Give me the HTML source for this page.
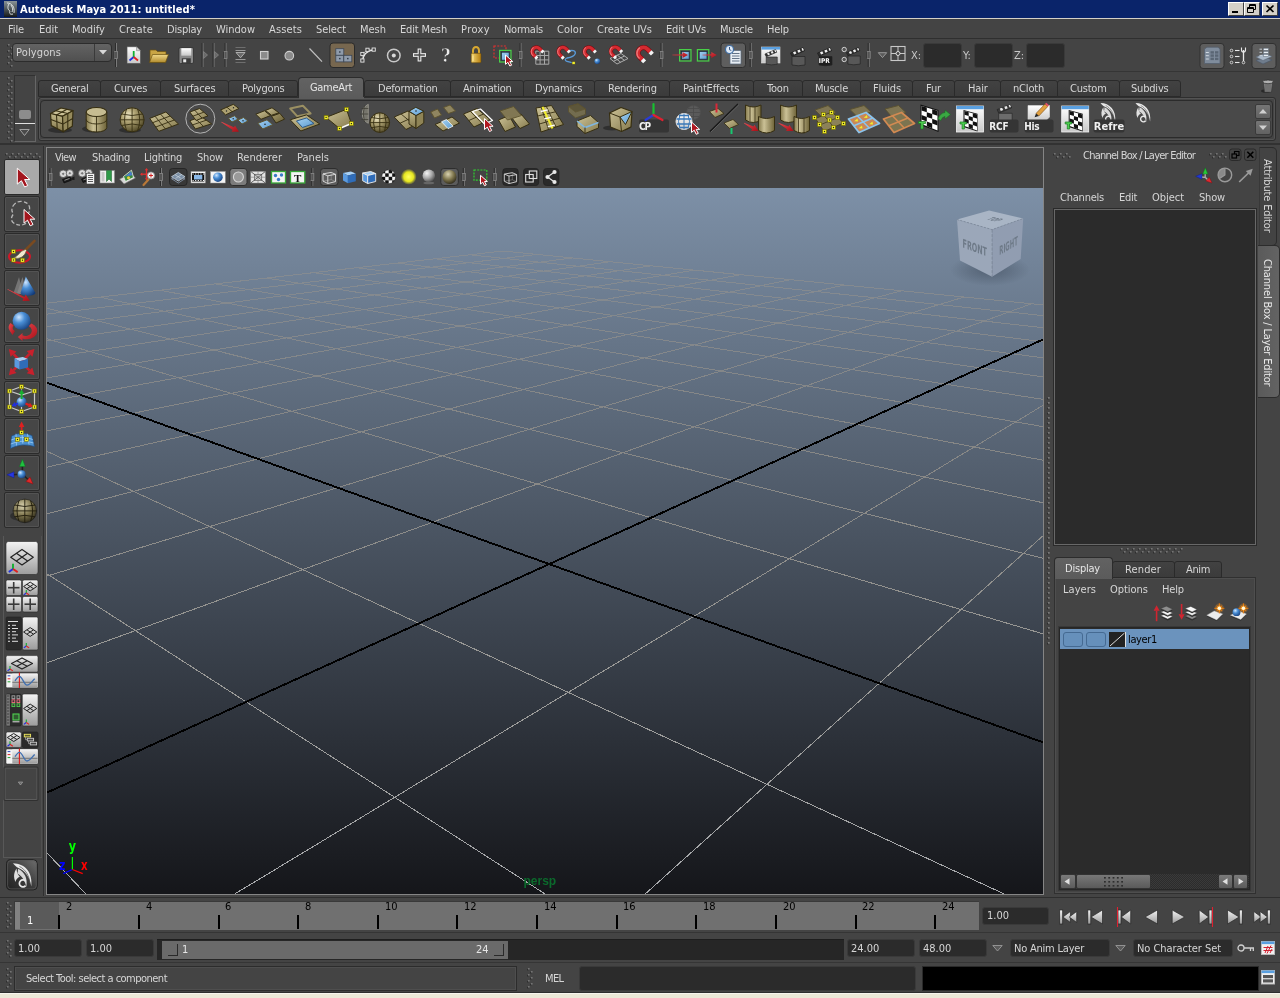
<!DOCTYPE html>
<html><head><meta charset="utf-8"><title>Autodesk Maya 2011: untitled*</title>
<style>
html,body{margin:0;padding:0;background:#444444;overflow:hidden}
body{width:1280px;height:998px;position:relative;font-family:"DejaVu Sans Condensed","Liberation Sans",sans-serif;font-size:11px;color:#d6d6d6}
.a{position:absolute;box-sizing:border-box}
.t{position:absolute;white-space:nowrap;line-height:1.2;will-change:transform}
svg{overflow:visible}
</style></head><body>
<svg width="0" height="0" style="position:absolute"><defs>
<linearGradient id="kh" x1="0" y1="0" x2="1" y2="1"><stop offset="0" stop-color="#cdc398"/><stop offset="1" stop-color="#857a4d"/></linearGradient>
<linearGradient id="khv" x1="0" y1="0" x2="0" y2="1"><stop offset="0" stop-color="#c2b88a"/><stop offset="1" stop-color="#82774b"/></linearGradient>
<linearGradient id="khd" x1="0" y1="0" x2="1" y2="1"><stop offset="0" stop-color="#a79b6c"/><stop offset="1" stop-color="#665c34"/></linearGradient>
<linearGradient id="khcyl" x1="0" y1="0" x2="1" y2="0"><stop offset="0" stop-color="#857a4d"/><stop offset=".35" stop-color="#cbc196"/><stop offset="1" stop-color="#6e6338"/></linearGradient>
<radialGradient id="khsph" cx=".35" cy=".3" r=".8"><stop offset="0" stop-color="#ece5c4"/><stop offset=".35" stop-color="#b0a474"/><stop offset="1" stop-color="#463e1e"/></radialGradient>
<radialGradient id="bsph" cx=".35" cy=".3" r=".8"><stop offset="0" stop-color="#cfe6ff"/><stop offset=".4" stop-color="#4a8fd6"/><stop offset="1" stop-color="#123a78"/></radialGradient>
<radialGradient id="gsph" cx=".35" cy=".3" r=".8"><stop offset="0" stop-color="#f4f4f4"/><stop offset=".5" stop-color="#a8a8a8"/><stop offset="1" stop-color="#404040"/></radialGradient>
<radialGradient id="ysph" cx=".5" cy=".5" r=".5"><stop offset="0" stop-color="#ffff60"/><stop offset=".6" stop-color="#e6e620"/><stop offset="1" stop-color="#e6e620" stop-opacity="0"/></radialGradient>
<radialGradient id="ksph2" cx=".4" cy=".3" r=".8"><stop offset="0" stop-color="#d9d2b0"/><stop offset=".5" stop-color="#7d744c"/><stop offset="1" stop-color="#1e1b10"/></radialGradient>
<linearGradient id="bl" x1="0" y1="0" x2="1" y2="1"><stop offset="0" stop-color="#a6d2f2"/><stop offset="1" stop-color="#5b9bd0"/></linearGradient>
<linearGradient id="btn" x1="0" y1="0" x2="0" y2="1"><stop offset="0" stop-color="#f4f4f4"/><stop offset="1" stop-color="#9c9c9c"/></linearGradient>
<linearGradient id="wht" x1="0" y1="0" x2="0" y2="1"><stop offset="0" stop-color="#ffffff"/><stop offset="1" stop-color="#c8c8c8"/></linearGradient>
<linearGradient id="redg" x1="0" y1="0" x2="1" y2="1"><stop offset="0" stop-color="#e84a50"/><stop offset="1" stop-color="#a80f18"/></linearGradient>
<linearGradient id="fold" x1="0" y1="0" x2="0" y2="1"><stop offset="0" stop-color="#f1d98a"/><stop offset="1" stop-color="#b08a2c"/></linearGradient>
<linearGradient id="gold" x1="0" y1="0" x2="1" y2="0"><stop offset="0" stop-color="#f6d873"/><stop offset="1" stop-color="#b47d10"/></linearGradient>
</defs></svg>
<div class="a" style="left:0px;top:0px;width:1280px;height:18px;background:#0a246a;"></div>
<div class="a" style="left:0px;top:18px;width:1280px;height:1px;background:#d4d0c8;"></div>
<svg class="a" style="left:4px;top:1px;" width="13" height="16" viewBox="0 0 13 16"><defs><linearGradient id="tig" x1="0" y1="0" x2="0" y2="1"><stop offset="0" stop-color="#8a9498"/><stop offset="1" stop-color="#15191b"/></linearGradient></defs><rect width="13" height="16" fill="url(#tig)"/><path d="M3 2 C8 2 11 6 10 12 M5 3 C3 6 4 9 6 10 C5 12 6 14 9 13 M7 4 C9 7 9 9 8 11" stroke="#e8ecec" stroke-width="1" fill="none" opacity=".9"/></svg>
<div class="t" style="left:20px;top:3px;font-size:11px;color:#ffffff;letter-spacing:0.070px;font-weight:bold;">Autodesk Maya 2011: untitled*</div>
<div class="a" style="left:1228px;top:2px;width:16px;height:14px;background:#d4d0c8;border-top:1px solid #fff;border-left:1px solid #fff;border-right:1px solid #404040;border-bottom:1px solid #404040;"></div>
<div class="a" style="left:1232px;top:11px;width:6px;height:2px;background:#000;"></div>
<div class="a" style="left:1244px;top:2px;width:16px;height:14px;background:#d4d0c8;border-top:1px solid #fff;border-left:1px solid #fff;border-right:1px solid #404040;border-bottom:1px solid #404040;"></div>
<svg class="a" style="left:1247px;top:4px;" width="10" height="10" viewBox="0 0 10 10"><path d="M2.5 0.5h6v5h-6z M2.5 1.5h6 M0.5 3.5h6v5h-6z M0.5 4.5h6" stroke="#000" fill="none" stroke-width="1"/><rect x="1" y="5" width="5" height="3" fill="#d4d0c8"/></svg>
<div class="a" style="left:1262px;top:2px;width:16px;height:14px;background:#d4d0c8;border-top:1px solid #fff;border-left:1px solid #fff;border-right:1px solid #404040;border-bottom:1px solid #404040;"></div>
<svg class="a" style="left:1266px;top:5px;" width="8" height="8" viewBox="0 0 8 8"><path d="M0.5 0.5 L7.5 7 M7.5 0.5 L0.5 7" stroke="#000" stroke-width="1.7" fill="none"/></svg>
<div class="t" style="left:8px;top:23px;font-size:11px;color:#d6d6d6;letter-spacing:-0.121px;">File</div>
<div class="t" style="left:39px;top:23px;font-size:11px;color:#d6d6d6;letter-spacing:-0.041px;">Edit</div>
<div class="t" style="left:72px;top:23px;font-size:11px;color:#d6d6d6;letter-spacing:0.038px;">Modify</div>
<div class="t" style="left:119px;top:23px;font-size:11px;color:#d6d6d6;letter-spacing:0.190px;">Create</div>
<div class="t" style="left:167px;top:23px;font-size:11px;color:#d6d6d6;letter-spacing:-0.212px;">Display</div>
<div class="t" style="left:216px;top:23px;font-size:11px;color:#d6d6d6;letter-spacing:-0.000px;">Window</div>
<div class="t" style="left:269px;top:23px;font-size:11px;color:#d6d6d6;letter-spacing:0.132px;">Assets</div>
<div class="t" style="left:316px;top:23px;font-size:11px;color:#d6d6d6;letter-spacing:-0.089px;">Select</div>
<div class="t" style="left:360px;top:23px;font-size:11px;color:#d6d6d6;letter-spacing:-0.015px;">Mesh</div>
<div class="t" style="left:400px;top:23px;font-size:11px;color:#d6d6d6;letter-spacing:-0.152px;">Edit Mesh</div>
<div class="t" style="left:461px;top:23px;font-size:11px;color:#d6d6d6;letter-spacing:0.395px;">Proxy</div>
<div class="t" style="left:504px;top:23px;font-size:11px;color:#d6d6d6;letter-spacing:-0.277px;">Normals</div>
<div class="t" style="left:557px;top:23px;font-size:11px;color:#d6d6d6;letter-spacing:0.033px;">Color</div>
<div class="t" style="left:597px;top:23px;font-size:11px;color:#d6d6d6;letter-spacing:-0.017px;">Create UVs</div>
<div class="t" style="left:666px;top:23px;font-size:11px;color:#d6d6d6;letter-spacing:-0.185px;">Edit UVs</div>
<div class="t" style="left:720px;top:23px;font-size:11px;color:#d6d6d6;letter-spacing:-0.209px;">Muscle</div>
<div class="t" style="left:767px;top:23px;font-size:11px;color:#d6d6d6;letter-spacing:-0.142px;">Help</div>
<div class="a" style="left:0px;top:38px;width:1280px;height:1px;background:#2f2f2f;"></div>
<svg class="a" style="left:7px;top:44px;" width="6" height="24" viewBox="0 0 6 24"><rect x="0" y="1" width="1.5" height="1.5" fill="#2e2e2e"/><rect x="1" y="0" width="1.6" height="1.6" fill="#747474"/><rect x="3" y="4" width="1.5" height="1.5" fill="#2e2e2e"/><rect x="4" y="3" width="1.6" height="1.6" fill="#747474"/><rect x="0" y="7" width="1.5" height="1.5" fill="#2e2e2e"/><rect x="1" y="6" width="1.6" height="1.6" fill="#747474"/><rect x="3" y="10" width="1.5" height="1.5" fill="#2e2e2e"/><rect x="4" y="9" width="1.6" height="1.6" fill="#747474"/><rect x="0" y="13" width="1.5" height="1.5" fill="#2e2e2e"/><rect x="1" y="12" width="1.6" height="1.6" fill="#747474"/><rect x="3" y="16" width="1.5" height="1.5" fill="#2e2e2e"/><rect x="4" y="15" width="1.6" height="1.6" fill="#747474"/><rect x="0" y="19" width="1.5" height="1.5" fill="#2e2e2e"/><rect x="1" y="18" width="1.6" height="1.6" fill="#747474"/><rect x="3" y="22" width="1.5" height="1.5" fill="#2e2e2e"/><rect x="4" y="21" width="1.6" height="1.6" fill="#747474"/></svg>
<div class="a" style="left:12px;top:43px;width:100px;height:19px;border:1px solid #2c2c2c;border-radius:4px;background:linear-gradient(#636363,#505050);"></div>
<div class="a" style="left:94px;top:44px;width:1px;height:17px;background:#3a3a3a;"></div>
<div class="t" style="left:16px;top:46px;font-size:11px;color:#d6d6d6;letter-spacing:0.125px;">Polygons</div>
<svg class="a" style="left:99px;top:50px;" width="8" height="5" viewBox="0 0 8 5"><path d="M0 0h8l-4 4.5z" fill="#d8d8d8"/></svg>
<div class="a" style="left:0px;top:71px;width:1280px;height:1px;background:#353535;"></div>
<div class="t" style="left:911px;top:49px;font-size:11px;color:#c8c8c8;">X:</div>
<div class="a" style="left:922.5px;top:42.5px;width:39px;height:25px;background:#2b2b2b;border:1px solid #3a3a3a;border-radius:3px;"></div>
<div class="t" style="left:962.5px;top:49px;font-size:11px;color:#c8c8c8;">Y:</div>
<div class="a" style="left:974px;top:42.5px;width:39px;height:25px;background:#2b2b2b;border:1px solid #3a3a3a;border-radius:3px;"></div>
<div class="t" style="left:1014px;top:49px;font-size:11px;color:#c8c8c8;">Z:</div>
<div class="a" style="left:1025.5px;top:42.5px;width:39px;height:25px;background:#2b2b2b;border:1px solid #3a3a3a;border-radius:3px;"></div>
<svg class="a" style="left:0;top:39px;will-change:transform" width="1280" height="32" viewBox="0 39 1280 32"><path d="M116.5 43.0L116.5 51.5" fill="none" stroke="#7a7a7a" stroke-width="1" /><path d="M116.5 58.5L116.5 67.0" fill="none" stroke="#7a7a7a" stroke-width="1" /><path d="M115.5 43.0L115.5 51.5" fill="none" stroke="#2c2c2c" stroke-width="1" /><path d="M115.5 58.5L115.5 67.0" fill="none" stroke="#2c2c2c" stroke-width="1" /><rect x="114.5" y="51.5" width="3" height="7" fill="#555" stroke="#8a8a8a" stroke-width="0.8" /><path d="M114.0 51.5L114.0 58.5" fill="none" stroke="#2c2c2c" stroke-width="0.8" /><path d="M127.0 46.7L136.5 46.7L140.5 50.7L140.5 63.5L127.0 63.5Z" fill="url(#wht)" stroke="#555" stroke-width="0.7" stroke-linejoin="round" /><path d="M136.5 46.7L136.5 50.7L140.5 50.7Z" fill="#cfcfcf" stroke="#777" stroke-width="0.5" stroke-linejoin="round" /><path d="M133.7 57.0L133.7 51.0" fill="none" stroke="#10b030" stroke-width="1.8" /><path d="M133.7 57.0L129.5 60.5" fill="none" stroke="#2030e0" stroke-width="1.8" /><path d="M133.7 57.0L138.0 60.5" fill="none" stroke="#e02020" stroke-width="1.8" /><path d="M150.0 50.0L156.0 50.0L157.5 51.5L166.0 51.5L166.0 61.5L150.0 61.5Z" fill="#c9a545" stroke="#6a5010" stroke-width="0.7" stroke-linejoin="round" /><path d="M152.5 54.5L168.5 54.5L165.5 62.5L149.5 62.5Z" fill="url(#fold)" stroke="#6a5010" stroke-width="0.7" stroke-linejoin="round" /><rect x="179" y="47.5" width="14.5" height="16" fill="#8a8a8a" stroke="#2e2e2e" stroke-width="0.8" rx="1.5" /><rect x="181.3" y="48.2" width="10" height="7.5" fill="url(#wht)" /><rect x="181.8" y="58.3" width="9" height="5" fill="#3c3c3c" /><rect x="183.2" y="59.3" width="3" height="3" fill="#e8e8e8" /><path d="M203.0 43.0L203.0 67.0" fill="none" stroke="#7a7a7a" stroke-width="1" /><path d="M202.0 43.0L202.0 67.0" fill="none" stroke="#2c2c2c" stroke-width="1" /><path d="M203.5 51.5L207.5 55.0L203.5 58.5Z" fill="#6a6a6a" stroke="#8a8a8a" stroke-width="0.7" stroke-linejoin="round" /><path d="M214.0 43.0L214.0 67.0" fill="none" stroke="#7a7a7a" stroke-width="1" /><path d="M213.0 43.0L213.0 67.0" fill="none" stroke="#2c2c2c" stroke-width="1" /><path d="M214.5 51.5L218.5 55.0L214.5 58.5Z" fill="#6a6a6a" stroke="#8a8a8a" stroke-width="0.7" stroke-linejoin="round" /><path d="M226.0 43.0L226.0 51.5" fill="none" stroke="#7a7a7a" stroke-width="1" /><path d="M226.0 58.5L226.0 67.0" fill="none" stroke="#7a7a7a" stroke-width="1" /><path d="M225.0 43.0L225.0 51.5" fill="none" stroke="#2c2c2c" stroke-width="1" /><path d="M225.0 58.5L225.0 67.0" fill="none" stroke="#2c2c2c" stroke-width="1" /><rect x="224.0" y="51.5" width="3" height="7" fill="#555" stroke="#8a8a8a" stroke-width="0.8" /><path d="M223.5 51.5L223.5 58.5" fill="none" stroke="#2c2c2c" stroke-width="0.8" /><path d="M235.5 47.5L245.5 47.5" fill="none" stroke="#6e6e6e" stroke-width="1" /><path d="M235.5 50.5L245.5 50.5" fill="none" stroke="#9a9a9a" stroke-width="1" /><path d="M235.5 59.5L245.5 59.5" fill="none" stroke="#9a9a9a" stroke-width="1" /><path d="M235.5 62.5L245.5 62.5" fill="none" stroke="#6e6e6e" stroke-width="1" /><path d="M236.0 52.5L245.0 52.5L240.5 57.8Z" fill="#6a6a6a" stroke="#b8b8b8" stroke-width="0.9" stroke-linejoin="round" /><rect x="260.5" y="51.5" width="7.5" height="7.5" fill="#8a8a8a" stroke="#d0d0d0" stroke-width="1.1" /><circle cx="289.3" cy="55.7" r="4.3" fill="#8a8a8a" stroke="#d0d0d0" stroke-width="1.1" /><path d="M309.5 48.5L322.0 61.7" fill="none" stroke="#c0c0c0" stroke-width="1.2" /><rect x="330" y="43" width="24.5" height="24.5" fill="#77674f" stroke="#2a2a2a" stroke-width="1" rx="3" /><rect x="335.8" y="48.7" width="8" height="6.6" fill="#8f9bab" stroke="#3c4654" stroke-width="0.8" /><rect x="339.1" y="51.300000000000004" width="1.4" height="1.4" fill="#2a3440" /><rect x="335.8" y="55.3" width="8" height="6.6" fill="#8f9bab" stroke="#3c4654" stroke-width="0.8" /><rect x="339.1" y="57.9" width="1.4" height="1.4" fill="#2a3440" /><rect x="343.8" y="55.3" width="8" height="6.6" fill="#8f9bab" stroke="#3c4654" stroke-width="0.8" /><rect x="347.1" y="57.9" width="1.4" height="1.4" fill="#2a3440" /><path d="M362.4 60.5 L362.4 54 L367.5 49.8 L373.7 49.6" stroke="#b0b0b0" stroke-width=".7" fill="none"/><path d="M362.6 60.5 Q364 51 373.6 49.8" stroke="#e8e8e8" stroke-width="1.3" fill="none"/><rect x="360.79999999999995" y="58.9" width="3.2" height="3.2" fill="#444" stroke="#e8e8e8" stroke-width="0.9" /><rect x="360.79999999999995" y="52.4" width="3.2" height="3.2" fill="#444" stroke="#e8e8e8" stroke-width="0.9" /><rect x="365.9" y="48.199999999999996" width="3.2" height="3.2" fill="#444" stroke="#e8e8e8" stroke-width="0.9" /><rect x="372.09999999999997" y="48.0" width="3.2" height="3.2" fill="#444" stroke="#e8e8e8" stroke-width="0.9" /><circle cx="393.8" cy="55.5" r="6.3" fill="none" stroke="#c8c8c8" stroke-width="1.5" /><circle cx="393.8" cy="55.5" r="2" fill="#d8d8d8" /><path d="M413.0 55.0L426.0 55.0" fill="none" stroke="#e8e8e8" stroke-width="3.8" /><path d="M419.5 48.5L419.5 61.5" fill="none" stroke="#e8e8e8" stroke-width="3.8" /><path d="M414.1 55.0L424.9 55.0" fill="none" stroke="#4a4a4a" stroke-width="1.5" /><path d="M419.5 49.6L419.5 60.4" fill="none" stroke="#4a4a4a" stroke-width="1.5" /><text x="441" y="62" font-size="19" font-weight="bold" fill="#ececec" stroke="#2e2e2e" stroke-width=".5" font-family="DejaVu Serif,Liberation Serif,serif" textLength="9.5" lengthAdjust="spacingAndGlyphs">?</text><path d="M473 54 V50.5 A3 3.6 0 0 1 479 50.5 V54" stroke="#d8a830" stroke-width="2" fill="none"/><rect x="471.2" y="53.3" width="9.8" height="9.4" fill="url(#gold)" stroke="#6a4a08" stroke-width="0.6" rx="1" /><path d="M473.0 55.5L473.0 61.0" fill="none" stroke="#ffe9a0" stroke-width="1" /><rect x="494" y="46" width="12" height="12" fill="none" stroke="#e03030" stroke-width="1.2" stroke-dasharray="2 1.3"/><rect x="499.6" y="50.4" width="11.4" height="11.6" fill="#444" stroke="#48d048" stroke-width="1.2" /><rect x="501.4" y="52.2" width="7.8" height="8" fill="url(#bl)" stroke="#1c2c3c" stroke-width="0.8" /><path d="M505.5 55.0L505.5 64.3L507.9 62.3L509.8 66.0L511.6 65.2L509.8 61.6L512.8 61.6Z" fill="#b01820" stroke="#fff" stroke-width="1.0" stroke-linejoin="round" /><path d="M521.0 43.0L521.0 51.5" fill="none" stroke="#7a7a7a" stroke-width="1" /><path d="M521.0 58.5L521.0 67.0" fill="none" stroke="#7a7a7a" stroke-width="1" /><path d="M520.0 43.0L520.0 51.5" fill="none" stroke="#2c2c2c" stroke-width="1" /><path d="M520.0 58.5L520.0 67.0" fill="none" stroke="#2c2c2c" stroke-width="1" /><rect x="519.0" y="51.5" width="3" height="7" fill="#555" stroke="#8a8a8a" stroke-width="0.8" /><path d="M518.5 51.5L518.5 58.5" fill="none" stroke="#2c2c2c" stroke-width="0.8" /><path d="M535.8 51.2h13v13h-13z M540.1 51.2v13 M544.5 51.2v13 M535.8 55.5h13 M535.8 59.9h13" stroke="#a8a8a8" stroke-width="1" fill="none"/><g transform="translate(536.6 51.8) rotate(-45) scale(1.0)"><path d="M-4.3 2.6 L-4.3 -0.3 A4.3 4.3 0 0 1 4.3 -0.3 L4.3 2.6" fill="none" stroke="#7a0a10" stroke-width="4.1"/><path d="M-4.3 2.6 L-4.3 -0.3 A4.3 4.3 0 0 1 4.3 -0.3 L4.3 2.6" fill="none" stroke="#d42a30" stroke-width="3.2"/><path d="M-5.2 0.5 A5.2 5.2 0 0 1 1 -5.3" fill="none" stroke="#f08a8a" stroke-width="1.1" opacity=".8"/><path d="M-4.3 2.6 V5.2 M4.3 2.6 V5.2" stroke="#f4f4f4" stroke-width="3.2"/></g><path d="M566.5 51.3 Q576 49 575.3 53.5 Q574 57 567 58 Q563.5 59.5 567 61.5 L573 62.8" stroke="#5a9ad8" stroke-width="1.3" fill="none"/><rect x="572" y="61.3" width="3.2" height="3.2" fill="#f2ee2a" stroke="#333" stroke-width="0.6" /><g transform="translate(563 51.8) rotate(-45) scale(1.0)"><path d="M-4.3 2.6 L-4.3 -0.3 A4.3 4.3 0 0 1 4.3 -0.3 L4.3 2.6" fill="none" stroke="#7a0a10" stroke-width="4.1"/><path d="M-4.3 2.6 L-4.3 -0.3 A4.3 4.3 0 0 1 4.3 -0.3 L4.3 2.6" fill="none" stroke="#d42a30" stroke-width="3.2"/><path d="M-5.2 0.5 A5.2 5.2 0 0 1 1 -5.3" fill="none" stroke="#f08a8a" stroke-width="1.1" opacity=".8"/><path d="M-4.3 2.6 V5.2 M4.3 2.6 V5.2" stroke="#f4f4f4" stroke-width="3.2"/></g><g transform="translate(589 51.8) rotate(-45) scale(1.0)"><path d="M-4.3 2.6 L-4.3 -0.3 A4.3 4.3 0 0 1 4.3 -0.3 L4.3 2.6" fill="none" stroke="#7a0a10" stroke-width="4.1"/><path d="M-4.3 2.6 L-4.3 -0.3 A4.3 4.3 0 0 1 4.3 -0.3 L4.3 2.6" fill="none" stroke="#d42a30" stroke-width="3.2"/><path d="M-5.2 0.5 A5.2 5.2 0 0 1 1 -5.3" fill="none" stroke="#f08a8a" stroke-width="1.1" opacity=".8"/><path d="M-4.3 2.6 V5.2 M4.3 2.6 V5.2" stroke="#f4f4f4" stroke-width="3.2"/></g><circle cx="597.3" cy="61.2" r="2.8" fill="url(#bsph)" /><path d="M610 58.5 L621 53.5 L628 58.5 L617 64 Z M613.6 56.9 L620.6 62.2 M617.3 55.2 L624.4 60.3 M613.5 61.3 L624.5 56" stroke="#b8b8b8" stroke-width=".9" fill="none"/><g transform="translate(615.3 51.5) rotate(-45) scale(1.0)"><path d="M-4.3 2.6 L-4.3 -0.3 A4.3 4.3 0 0 1 4.3 -0.3 L4.3 2.6" fill="none" stroke="#7a0a10" stroke-width="4.1"/><path d="M-4.3 2.6 L-4.3 -0.3 A4.3 4.3 0 0 1 4.3 -0.3 L4.3 2.6" fill="none" stroke="#d42a30" stroke-width="3.2"/><path d="M-5.2 0.5 A5.2 5.2 0 0 1 1 -5.3" fill="none" stroke="#f08a8a" stroke-width="1.1" opacity=".8"/><path d="M-4.3 2.6 V5.2 M4.3 2.6 V5.2" stroke="#f4f4f4" stroke-width="3.2"/></g><g transform="translate(643.8 53.3) rotate(-45) scale(1.28)"><path d="M-4.3 2.6 L-4.3 -0.3 A4.3 4.3 0 0 1 4.3 -0.3 L4.3 2.6" fill="none" stroke="#7a0a10" stroke-width="4.1"/><path d="M-4.3 2.6 L-4.3 -0.3 A4.3 4.3 0 0 1 4.3 -0.3 L4.3 2.6" fill="none" stroke="#d42a30" stroke-width="3.2"/><path d="M-5.2 0.5 A5.2 5.2 0 0 1 1 -5.3" fill="none" stroke="#f08a8a" stroke-width="1.1" opacity=".8"/><path d="M-4.3 2.6 V5.2 M4.3 2.6 V5.2" stroke="#f4f4f4" stroke-width="3.2"/></g><path d="M662.0 43.0L662.0 51.5" fill="none" stroke="#7a7a7a" stroke-width="1" /><path d="M662.0 58.5L662.0 67.0" fill="none" stroke="#7a7a7a" stroke-width="1" /><path d="M661.0 43.0L661.0 51.5" fill="none" stroke="#2c2c2c" stroke-width="1" /><path d="M661.0 58.5L661.0 67.0" fill="none" stroke="#2c2c2c" stroke-width="1" /><rect x="660.0" y="51.5" width="3" height="7" fill="#555" stroke="#8a8a8a" stroke-width="0.8" /><path d="M659.5 51.5L659.5 58.5" fill="none" stroke="#2c2c2c" stroke-width="0.8" /><rect x="679.6" y="49.6" width="11.4" height="11.4" fill="none" stroke="#48d048" stroke-width="1.2" /><rect x="681.4" y="51.4" width="7.8" height="7.8" fill="url(#bl)" stroke="#1c2c3c" stroke-width="0.8" /><path d="M672.3 55.3L682.5 55.8L682.5 58.0L688.0 55.0L682.5 52.0L682.5 54.2L672.3 54.7Z" fill="url(#redg)" /><rect x="697.4" y="49.6" width="11.4" height="11.4" fill="none" stroke="#48d048" stroke-width="1.2" /><rect x="699.2" y="51.4" width="7.8" height="7.8" fill="url(#bl)" stroke="#1c2c3c" stroke-width="0.8" /><path d="M702.5 55.3L711.3 55.8L711.3 58.0L716.8 55.0L711.3 52.0L711.3 54.2L702.5 54.7Z" fill="url(#redg)" /><rect x="721" y="43" width="24.5" height="24.5" fill="#5e5e5e" stroke="#303030" stroke-width="1" rx="3" /><path d="M730.0 50.5L741.0 50.5L741.0 64.0L730.0 64.0Z" fill="#e8eef4" stroke="#55657a" stroke-width="0.7" stroke-linejoin="round" /><path d="M732.0 53.5L739.5 53.5" fill="none" stroke="#55657a" stroke-width="0.9" /><path d="M732.0 56.0L739.5 56.0" fill="none" stroke="#55657a" stroke-width="0.9" /><path d="M732.0 58.5L739.5 58.5" fill="none" stroke="#55657a" stroke-width="0.9" /><path d="M732.0 61.0L739.5 61.0" fill="none" stroke="#55657a" stroke-width="0.9" /><circle cx="729.5" cy="49.5" r="4" fill="#dfeaf6" stroke="#3c6aa0" stroke-width="1.2" /><path d="M729.5 47.0L729.5 49.7L731.3 50.5" fill="none" stroke="#2a4a78" stroke-width="0.9" /><path d="M751.2 43.0L751.2 51.5" fill="none" stroke="#7a7a7a" stroke-width="1" /><path d="M751.2 58.5L751.2 67.0" fill="none" stroke="#7a7a7a" stroke-width="1" /><path d="M750.2 43.0L750.2 51.5" fill="none" stroke="#2c2c2c" stroke-width="1" /><path d="M750.2 58.5L750.2 67.0" fill="none" stroke="#2c2c2c" stroke-width="1" /><rect x="749.2" y="51.5" width="3" height="7" fill="#555" stroke="#8a8a8a" stroke-width="0.8" /><path d="M748.7 51.5L748.7 58.5" fill="none" stroke="#2c2c2c" stroke-width="0.8" /><rect x="761.5" y="47" width="18.5" height="16" fill="url(#wht)" stroke="#ddd" stroke-width="0.6" /><rect x="761.5" y="47" width="18.5" height="2.6" fill="#5aa0e0" /><g transform="translate(764.5 48.5) scale(0.85)"><path d="M0.5 6.5 L13 1.2 L14.5 4.3 L2 9.8 Z" fill="#303030" stroke="#1a1a1a" stroke-width=".6"/><path d="M3 5.7l2.3-1 1.1 2.3-2.3 1z M7.3 3.9l2.3-1 1.1 2.3-2.3 1z M11.5 2.1l1.4-.6 1 2.3-1.3.6z" fill="#f0f0f0"/><path d="M2 10 H15 V18.5 Q8 20 2 18.5 Z" fill="#585858" stroke="#222" stroke-width=".7"/></g><g transform="translate(790 46.5) scale(1.0)"><path d="M0.5 6.5 L13 1.2 L14.5 4.3 L2 9.8 Z" fill="#303030" stroke="#1a1a1a" stroke-width=".6"/><path d="M3 5.7l2.3-1 1.1 2.3-2.3 1z M7.3 3.9l2.3-1 1.1 2.3-2.3 1z M11.5 2.1l1.4-.6 1 2.3-1.3.6z" fill="#f0f0f0"/><path d="M2 10 H15 V18.5 Q8 20 2 18.5 Z" fill="#585858" stroke="#222" stroke-width=".7"/></g><g transform="translate(817 46.5) scale(1.0)"><path d="M0.5 6.5 L13 1.2 L14.5 4.3 L2 9.8 Z" fill="#303030" stroke="#1a1a1a" stroke-width=".6"/><path d="M3 5.7l2.3-1 1.1 2.3-2.3 1z M7.3 3.9l2.3-1 1.1 2.3-2.3 1z M11.5 2.1l1.4-.6 1 2.3-1.3.6z" fill="#f0f0f0"/><path d="M2 10 H15 V18.5 Q8 20 2 18.5 Z" fill="#1e1e1e" stroke="#222" stroke-width=".7"/></g><text x="818.7" y="63.3" font-size="6.5" fill="#fff" font-family="DejaVu Sans Condensed,Liberation Sans,sans-serif" font-weight="bold" textLength="11">IPR</text><g transform="translate(846 46.5) scale(0.95)"><path d="M0.5 6.5 L13 1.2 L14.5 4.3 L2 9.8 Z" fill="#303030" stroke="#1a1a1a" stroke-width=".6"/><path d="M3 5.7l2.3-1 1.1 2.3-2.3 1z M7.3 3.9l2.3-1 1.1 2.3-2.3 1z M11.5 2.1l1.4-.6 1 2.3-1.3.6z" fill="#f0f0f0"/><path d="M2 10 H15 V18.5 Q8 20 2 18.5 Z" fill="#585858" stroke="#222" stroke-width=".7"/></g><circle cx="844.2" cy="49.5" r="2.2" fill="#555" stroke="#d0d0d0" stroke-width="1" /><circle cx="844.2" cy="59.5" r="2.2" fill="#555" stroke="#d0d0d0" stroke-width="1" /><path d="M869.2 43.0L869.2 51.5" fill="none" stroke="#7a7a7a" stroke-width="1" /><path d="M869.2 58.5L869.2 67.0" fill="none" stroke="#7a7a7a" stroke-width="1" /><path d="M868.2 43.0L868.2 51.5" fill="none" stroke="#2c2c2c" stroke-width="1" /><path d="M868.2 58.5L868.2 67.0" fill="none" stroke="#2c2c2c" stroke-width="1" /><rect x="867.2" y="51.5" width="3" height="7" fill="#555" stroke="#8a8a8a" stroke-width="0.8" /><path d="M866.7 51.5L866.7 58.5" fill="none" stroke="#2c2c2c" stroke-width="0.8" /><path d="M878.3 52.7L886.7 52.7L882.5 57.6Z" fill="#5a5a5a" stroke="#a0a0a0" stroke-width="0.9" stroke-linejoin="round" /><rect x="891" y="46.5" width="14" height="14" fill="none" stroke="#c8c8c8" stroke-width="1.1" /><path d="M891.0 53.5L905.0 53.5" fill="none" stroke="#c8c8c8" stroke-width="1" /><path d="M898.0 46.5L898.0 60.5" fill="none" stroke="#c8c8c8" stroke-width="1" /><circle cx="898" cy="53.5" r="2" fill="#444" stroke="#e0e0e0" stroke-width="1" /><rect x="1200" y="43.5" width="24" height="25" fill="#5e5e5e" stroke="#303030" stroke-width="1" rx="3" /><path d="M1204.5 49.0L1207.0 47.2L1218.0 47.2L1220.0 49.0L1220.0 63.5L1204.5 63.5Z" fill="#7f8c9c" stroke="#55606e" stroke-width="0.8" stroke-linejoin="round" /><path d="M1205.8 52.5L1208.8 52.5" fill="none" stroke="#d0d8e0" stroke-width="1" /><rect x="1210.5" y="51.2" width="3.4" height="2.4" fill="#5a6674" /><rect x="1215" y="51.2" width="3.4" height="2.4" fill="#5a6674" /><path d="M1205.8 55.7L1208.8 55.7" fill="none" stroke="#d0d8e0" stroke-width="1" /><rect x="1210.5" y="54.400000000000006" width="3.4" height="2.4" fill="#5a6674" /><rect x="1215" y="54.400000000000006" width="3.4" height="2.4" fill="#5a6674" /><path d="M1205.8 59.0L1208.8 59.0" fill="none" stroke="#d0d8e0" stroke-width="1" /><rect x="1210.5" y="57.7" width="3.4" height="2.4" fill="#5a6674" /><rect x="1215" y="57.7" width="3.4" height="2.4" fill="#5a6674" /><circle cx="1231.5" cy="50.5" r="1.3" fill="#444" stroke="#e8e8e8" stroke-width="0.8" /><path d="M1235.0 50.5L1239.5 50.5" fill="none" stroke="#e8e8e8" stroke-width="1.1" /><circle cx="1231.5" cy="56.5" r="1.3" fill="#444" stroke="#e8e8e8" stroke-width="0.8" /><path d="M1235.0 56.5L1239.5 56.5" fill="none" stroke="#e8e8e8" stroke-width="1.1" /><circle cx="1231.5" cy="62.5" r="1.3" fill="#444" stroke="#e8e8e8" stroke-width="0.8" /><path d="M1235.0 62.5L1239.5 62.5" fill="none" stroke="#e8e8e8" stroke-width="1.1" /><path d="M1243.5 50.0L1243.5 61.0" fill="none" stroke="#e8e8e8" stroke-width="1.3" /><circle cx="1243.5" cy="62.5" r="1.3" fill="#444" stroke="#e8e8e8" stroke-width="0.8" /><path d="M1241.5 47.5 v2.5 a2 2 0 0 0 4 0 v-2.5" stroke="#e8e8e8" stroke-width="1.1" fill="none"/><rect x="1252" y="43.5" width="24" height="25" fill="#5e5e5e" stroke="#303030" stroke-width="1" rx="3" /><path d="M1256.0 60.5L1265.0 57.0L1272.0 60.0L1263.0 64.0Z" fill="#6f7c8c" stroke="#4a5666" stroke-width="0.6" stroke-linejoin="round" /><path d="M1256.0 57.0L1265.0 53.5L1272.0 56.5L1263.0 60.5Z" fill="#aab8c8" stroke="#5a6676" stroke-width="0.6" stroke-linejoin="round" /><rect x="1263.3" y="48.2" width="5.2" height="2.2" fill="#e8eef4" stroke="#55606e" stroke-width="0.5" /><path d="M1259.5 49.2L1262.0 49.2" fill="none" stroke="#d0d8e0" stroke-width="0.9" /><rect x="1263.3" y="51.3" width="5.2" height="2.2" fill="#e8eef4" stroke="#55606e" stroke-width="0.5" /><path d="M1259.5 52.3L1262.0 52.3" fill="none" stroke="#d0d8e0" stroke-width="0.9" /><rect x="1263.3" y="54.4" width="5.2" height="2.2" fill="#e8eef4" stroke="#55606e" stroke-width="0.5" /><path d="M1259.5 55.4L1262.0 55.4" fill="none" stroke="#d0d8e0" stroke-width="0.9" /></svg>
<svg class="a" style="left:7px;top:77px;" width="6" height="66" viewBox="0 0 6 66"><rect x="0" y="1" width="1.5" height="1.5" fill="#2e2e2e"/><rect x="1" y="0" width="1.6" height="1.6" fill="#747474"/><rect x="3" y="4" width="1.5" height="1.5" fill="#2e2e2e"/><rect x="4" y="3" width="1.6" height="1.6" fill="#747474"/><rect x="0" y="7" width="1.5" height="1.5" fill="#2e2e2e"/><rect x="1" y="6" width="1.6" height="1.6" fill="#747474"/><rect x="3" y="10" width="1.5" height="1.5" fill="#2e2e2e"/><rect x="4" y="9" width="1.6" height="1.6" fill="#747474"/><rect x="0" y="13" width="1.5" height="1.5" fill="#2e2e2e"/><rect x="1" y="12" width="1.6" height="1.6" fill="#747474"/><rect x="3" y="16" width="1.5" height="1.5" fill="#2e2e2e"/><rect x="4" y="15" width="1.6" height="1.6" fill="#747474"/><rect x="0" y="19" width="1.5" height="1.5" fill="#2e2e2e"/><rect x="1" y="18" width="1.6" height="1.6" fill="#747474"/><rect x="3" y="22" width="1.5" height="1.5" fill="#2e2e2e"/><rect x="4" y="21" width="1.6" height="1.6" fill="#747474"/><rect x="0" y="25" width="1.5" height="1.5" fill="#2e2e2e"/><rect x="1" y="24" width="1.6" height="1.6" fill="#747474"/><rect x="3" y="28" width="1.5" height="1.5" fill="#2e2e2e"/><rect x="4" y="27" width="1.6" height="1.6" fill="#747474"/><rect x="0" y="31" width="1.5" height="1.5" fill="#2e2e2e"/><rect x="1" y="30" width="1.6" height="1.6" fill="#747474"/><rect x="3" y="34" width="1.5" height="1.5" fill="#2e2e2e"/><rect x="4" y="33" width="1.6" height="1.6" fill="#747474"/><rect x="0" y="37" width="1.5" height="1.5" fill="#2e2e2e"/><rect x="1" y="36" width="1.6" height="1.6" fill="#747474"/><rect x="3" y="40" width="1.5" height="1.5" fill="#2e2e2e"/><rect x="4" y="39" width="1.6" height="1.6" fill="#747474"/><rect x="0" y="43" width="1.5" height="1.5" fill="#2e2e2e"/><rect x="1" y="42" width="1.6" height="1.6" fill="#747474"/><rect x="3" y="46" width="1.5" height="1.5" fill="#2e2e2e"/><rect x="4" y="45" width="1.6" height="1.6" fill="#747474"/><rect x="0" y="49" width="1.5" height="1.5" fill="#2e2e2e"/><rect x="1" y="48" width="1.6" height="1.6" fill="#747474"/><rect x="3" y="52" width="1.5" height="1.5" fill="#2e2e2e"/><rect x="4" y="51" width="1.6" height="1.6" fill="#747474"/><rect x="0" y="55" width="1.5" height="1.5" fill="#2e2e2e"/><rect x="1" y="54" width="1.6" height="1.6" fill="#747474"/><rect x="3" y="58" width="1.5" height="1.5" fill="#2e2e2e"/><rect x="4" y="57" width="1.6" height="1.6" fill="#747474"/><rect x="0" y="61" width="1.5" height="1.5" fill="#2e2e2e"/><rect x="1" y="60" width="1.6" height="1.6" fill="#747474"/><rect x="3" y="64" width="1.5" height="1.5" fill="#2e2e2e"/><rect x="4" y="63" width="1.6" height="1.6" fill="#747474"/></svg>
<div class="a" style="left:14px;top:75px;width:22px;height:67px;border:1px solid #313131;border-right:1px solid #666;border-bottom:1px solid #666;"></div>
<div class="a" style="left:19px;top:110px;width:12px;height:9px;background:#8c8c8c;border-radius:2px;"></div>
<div class="a" style="left:15px;top:123px;width:20px;height:1px;background:#e0e0e0;"></div>
<svg class="a" style="left:19px;top:129px;" width="11" height="7" viewBox="0 0 11 7"><path d="M0.8 0.5h9.4l-4.7 6z" fill="#4a4a4a" stroke="#a0a0a0" stroke-width="1"/></svg>
<div class="a" style="left:38px;top:80px;width:63px;height:17px;background:linear-gradient(#424242,#3b3b3b);border:1px solid #2a2a2a;border-radius:3px 3px 0 0;"></div>
<div class="t" style="left:50.6796728515625px;top:82px;font-size:11px;color:#d6d6d6;letter-spacing:-0.195px;">General</div>
<div class="a" style="left:100px;top:80px;width:61px;height:17px;background:linear-gradient(#424242,#3b3b3b);border:1px solid #2a2a2a;border-radius:3px 3px 0 0;"></div>
<div class="t" style="left:113.92395751953126px;top:82px;font-size:11px;color:#d6d6d6;letter-spacing:-0.200px;">Curves</div>
<div class="a" style="left:160px;top:80px;width:69px;height:17px;background:linear-gradient(#424242,#3b3b3b);border:1px solid #2a2a2a;border-radius:3px 3px 0 0;"></div>
<div class="t" style="left:173.8212939453125px;top:82px;font-size:11px;color:#d6d6d6;letter-spacing:-0.188px;">Surfaces</div>
<div class="a" style="left:228px;top:80px;width:70px;height:17px;background:linear-gradient(#424242,#3b3b3b);border:1px solid #2a2a2a;border-radius:3px 3px 0 0;"></div>
<div class="t" style="left:241.7690576171875px;top:82px;font-size:11px;color:#d6d6d6;letter-spacing:-0.193px;">Polygons</div>
<div class="a" style="left:297.5px;top:76.5px;width:66.5px;height:22px;background:linear-gradient(#626262,#5b5b5b);border:1px solid #2c2c2c;border-bottom:none;border-radius:4px 4px 0 0;"></div>
<div class="t" style="left:310.0151123046875px;top:81px;font-size:11px;color:#e6e6e6;letter-spacing:-0.316px;">GameArt</div>
<div class="a" style="left:364px;top:80px;width:87px;height:17px;background:linear-gradient(#424242,#3b3b3b);border:1px solid #2a2a2a;border-radius:3px 3px 0 0;"></div>
<div class="t" style="left:377.690546875px;top:82px;font-size:11px;color:#d6d6d6;letter-spacing:-0.197px;">Deformation</div>
<div class="a" style="left:450px;top:80px;width:74px;height:17px;background:linear-gradient(#424242,#3b3b3b);border:1px solid #2a2a2a;border-radius:3px 3px 0 0;"></div>
<div class="t" style="left:462.65683837890623px;top:82px;font-size:11px;color:#d6d6d6;letter-spacing:-0.196px;">Animation</div>
<div class="a" style="left:523px;top:80px;width:72px;height:17px;background:linear-gradient(#424242,#3b3b3b);border:1px solid #2a2a2a;border-radius:3px 3px 0 0;"></div>
<div class="t" style="left:535.4522094726562px;top:82px;font-size:11px;color:#d6d6d6;letter-spacing:-0.214px;">Dynamics</div>
<div class="a" style="left:594px;top:80px;width:76px;height:17px;background:linear-gradient(#424242,#3b3b3b);border:1px solid #2a2a2a;border-radius:3px 3px 0 0;"></div>
<div class="t" style="left:607.6365771484375px;top:82px;font-size:11px;color:#d6d6d6;letter-spacing:-0.196px;">Rendering</div>
<div class="a" style="left:669px;top:80px;width:85px;height:17px;background:linear-gradient(#424242,#3b3b3b);border:1px solid #2a2a2a;border-radius:3px 3px 0 0;"></div>
<div class="t" style="left:683.479189453125px;top:82px;font-size:11px;color:#d6d6d6;letter-spacing:-0.169px;">PaintEffects</div>
<div class="a" style="left:753px;top:80px;width:50px;height:17px;background:linear-gradient(#424242,#3b3b3b);border:1px solid #2a2a2a;border-radius:3px 3px 0 0;"></div>
<div class="t" style="left:767.11736328125px;top:82px;font-size:11px;color:#d6d6d6;letter-spacing:-0.197px;">Toon</div>
<div class="a" style="left:802px;top:80px;width:59px;height:17px;background:linear-gradient(#424242,#3b3b3b);border:1px solid #2a2a2a;border-radius:3px 3px 0 0;"></div>
<div class="t" style="left:814.9734326171875px;top:82px;font-size:11px;color:#d6d6d6;letter-spacing:-0.200px;">Muscle</div>
<div class="a" style="left:860px;top:80px;width:53px;height:17px;background:linear-gradient(#424242,#3b3b3b);border:1px solid #2a2a2a;border-radius:3px 3px 0 0;"></div>
<div class="t" style="left:872.5522631835937px;top:82px;font-size:11px;color:#d6d6d6;letter-spacing:-0.169px;">Fluids</div>
<div class="a" style="left:912px;top:80px;width:43px;height:17px;background:linear-gradient(#424242,#3b3b3b);border:1px solid #2a2a2a;border-radius:3px 3px 0 0;"></div>
<div class="t" style="left:926.0542333984375px;top:82px;font-size:11px;color:#d6d6d6;letter-spacing:-0.180px;">Fur</div>
<div class="a" style="left:954px;top:80px;width:47px;height:17px;background:linear-gradient(#424242,#3b3b3b);border:1px solid #2a2a2a;border-radius:3px 3px 0 0;"></div>
<div class="t" style="left:967.6930932617188px;top:82px;font-size:11px;color:#d6d6d6;letter-spacing:-0.178px;">Hair</div>
<div class="a" style="left:1000px;top:80px;width:58px;height:17px;background:linear-gradient(#424242,#3b3b3b);border:1px solid #2a2a2a;border-radius:3px 3px 0 0;"></div>
<div class="t" style="left:1013.4916772460938px;top:82px;font-size:11px;color:#d6d6d6;letter-spacing:-0.187px;">nCloth</div>
<div class="a" style="left:1057px;top:80px;width:63px;height:17px;background:linear-gradient(#424242,#3b3b3b);border:1px solid #2a2a2a;border-radius:3px 3px 0 0;"></div>
<div class="t" style="left:1070.2055224609376px;top:82px;font-size:11px;color:#d6d6d6;letter-spacing:-0.221px;">Custom</div>
<div class="a" style="left:1119px;top:80px;width:62px;height:17px;background:linear-gradient(#424242,#3b3b3b);border:1px solid #2a2a2a;border-radius:3px 3px 0 0;"></div>
<div class="t" style="left:1131.237158203125px;top:82px;font-size:11px;color:#d6d6d6;letter-spacing:-0.194px;">Subdivs</div>
<div class="a" style="left:38px;top:97px;width:1238px;height:44px;background:#444;border:1px solid #2e2e2e;border-radius:3px;box-shadow:inset 0 0 0 1px #535353;"></div>
<div class="a" style="left:40px;top:100px;width:1233px;height:38px;background:#494949;border:1px solid #2b2b2b;border-radius:4px;"></div>
<div class="a" style="left:298.5px;top:97px;width:65px;height:2px;background:#5b5b5b;"></div>
<div class="a" style="left:1255px;top:104px;width:16px;height:15px;background:linear-gradient(#757575,#626262);border:1px solid #3a3a3a;border-radius:2px;"></div>
<svg class="a" style="left:1259px;top:109px;" width="8" height="5" viewBox="0 0 8 5"><path d="M0 4.5L4 0L8 4.5z" fill="#d0d0d0"/></svg>
<div class="a" style="left:1255px;top:120px;width:16px;height:15px;background:linear-gradient(#757575,#626262);border:1px solid #3a3a3a;border-radius:2px;"></div>
<svg class="a" style="left:1259px;top:125px;" width="8" height="5" viewBox="0 0 8 5"><path d="M0 0.5h8L4 5z" fill="#d0d0d0"/></svg>
<svg class="a" style="left:1261px;top:78px;" width="13" height="15" viewBox="0 0 13 15"><ellipse cx="5" cy="13" rx="5" ry="1.8" fill="#000" opacity=".4"/><path d="M2.5 4.5h9l-1 9.5h-7z" fill="#8a8a8a" stroke="#3a3a3a" stroke-width=".8"/><path d="M5 5.5v7.5M7 5.5v7.5M9 5.5v7.5" stroke="#555" stroke-width=".9"/><ellipse cx="7" cy="3.8" rx="5.2" ry="1.9" fill="#b0b0b0" stroke="#3a3a3a" stroke-width=".8"/><path d="M5.5 2.2q1.5-1.8 3 0" stroke="#3a3a3a" fill="none" stroke-width=".9"/></svg>
<div class="a" style="left:0px;top:143px;width:1280px;height:2px;background:#323232;"></div>
<svg class="a" style="left:0;top:98px;will-change:transform" width="1280" height="44" viewBox="0 98 1280 44"><ellipse cx="60" cy="130" rx="12" ry="3" fill="#000" opacity=".35"/><path d="M50.5 113.5L61.0 108.0L73.0 110.7L62.5 116.3Z" fill="#cbc197" stroke="#372f12" stroke-width="1.2" stroke-linejoin="round" /><path d="M55.8 110.8L67.8 113.5" fill="none" stroke="#372f12" stroke-width="1.08" /><path d="M56.5 114.9L67.0 109.3" fill="none" stroke="#372f12" stroke-width="1.08" /><path d="M50.5 113.5L62.5 116.3L63.2 131.8L51.3 125.6Z" fill="url(#khv)" stroke="#372f12" stroke-width="1.2" stroke-linejoin="round" /><path d="M56.5 114.9L57.2 128.7" fill="none" stroke="#372f12" stroke-width="1.08" /><path d="M50.9 119.5L62.9 124.1" fill="none" stroke="#372f12" stroke-width="1.08" /><path d="M62.5 116.3L73.0 110.7L72.3 126.3L63.2 131.8Z" fill="#958a5c" stroke="#372f12" stroke-width="1.2" stroke-linejoin="round" /><path d="M67.8 113.5L67.8 129.1" fill="none" stroke="#372f12" stroke-width="1.08" /><path d="M62.9 124.1L72.7 118.5" fill="none" stroke="#372f12" stroke-width="1.08" /><ellipse cx="94" cy="129" rx="12" ry="3.5" fill="#000" opacity=".35"/><path d="M86.2 112 V127.5 A10.3 4.5 0 0 0 106.8 127.5 V112 Z" fill="url(#khcyl)" stroke="#372f12" stroke-width="1"/><path d="M86.2 119.5 A10.3 4.5 0 0 0 106.8 119.5 M96.5 116.5V132" stroke="#372f12" fill="none" stroke-width=".9"/><ellipse cx="96.5" cy="112" rx="10.3" ry="4.5" fill="#c6bc91" stroke="#372f12" stroke-width="1.1" /><ellipse cx="130" cy="130" rx="11" ry="3" fill="#000" opacity=".35"/><circle cx="132.1" cy="119.8" r="12" fill="url(#khsph)" stroke="#372f12" stroke-width="1" /><path d="M120.1 119.8H144.1 M132.1 107.8V131.8 M121.5 114 Q132.1 117 142.7 114 M121.5 125.5 Q132.1 122.5 142.7 125.5 M126.5 109.2 Q122.5 119.8 126.5 130.4 M137.7 109.2 Q141.7 119.8 137.7 130.4" stroke="#372f12" stroke-width=".9" fill="none"/><path d="M149.7 118.4L165.9 112.0L178.5 124.0L158.8 131.3Z" fill="url(#kh)" stroke="#372f12" stroke-width="1" stroke-linejoin="round" /><path d="M155.1 116.3L165.4 128.9" fill="none" stroke="#372f12" stroke-width="0.9" /><path d="M160.5 114.1L171.9 126.4" fill="none" stroke="#372f12" stroke-width="0.9" /><path d="M152.7 122.7L170.1 116.0" fill="none" stroke="#372f12" stroke-width="0.9" /><path d="M155.8 127.0L174.3 120.0" fill="none" stroke="#372f12" stroke-width="0.9" /><circle cx="200.3" cy="118.7" r="14.5" fill="none" stroke="#b4b4b4" stroke-width="1.0" /><path d="M189.8 120.8L201.0 116.5L211.6 123.8L195.4 129.0Z" fill="url(#kh)" stroke="#372f12" stroke-width="1" stroke-linejoin="round" /><path d="M195.4 118.7L203.5 126.4" fill="none" stroke="#372f12" stroke-width="0.9" /><path d="M192.6 124.9L206.3 120.2" fill="none" stroke="#372f12" stroke-width="0.9" /><path d="M189.8 112.0L199.6 108.5L208.0 115.8L196.1 120.5Z" fill="url(#kh)" stroke="#372f12" stroke-width="1" stroke-linejoin="round" /><path d="M194.7 110.2L202.1 118.2" fill="none" stroke="#372f12" stroke-width="0.9" /><path d="M192.9 116.2L203.8 112.2" fill="none" stroke="#372f12" stroke-width="0.9" /><path d="M220.6 110.0L233.3 104.3L238.9 108.5L225.5 114.9Z" fill="#aca071" stroke="#372f12" stroke-width="1" stroke-linejoin="round" /><path d="M226.9 107.2L232.2 111.7" fill="none" stroke="#372f12" stroke-width="0.9" /><circle cx="226.5" cy="111" r="0.7" fill="#222" /><circle cx="233.5" cy="107.8" r="0.7" fill="#222" /><path d="M228.4 118.4L234.5 115.8L238.0 119.2L232.0 122.0Z" fill="url(#bl)" stroke="#5e5430" stroke-width="1" stroke-linejoin="round" /><path d="M238.0 120.0L243.5 117.5L248.0 121.0L242.0 124.0Z" fill="url(#bl)" stroke="#5e5430" stroke-width="1" stroke-linejoin="round" /><circle cx="233.2" cy="118.8" r="0.7" fill="#222" /><circle cx="243" cy="120.8" r="0.7" fill="#222" /><path d="M221.2 122.3L232.6 130.0L231.6 131.8L239.0 131.8L235.0 125.5L234.0 127.3L221.4 121.7Z" fill="url(#redg)" /><path d="M255.8 114.2L264.5 110.8L270.5 115.6L261.0 119.3Z" fill="url(#kh)" stroke="#372f12" stroke-width="1" stroke-linejoin="round" /><path d="M265.5 110.4L272.0 107.8L279.0 112.8L271.5 115.3Z" fill="url(#kh)" stroke="#372f12" stroke-width="1" stroke-linejoin="round" /><path d="M271.5 116.3L279.8 113.3L284.6 119.1L276.0 123.0Z" fill="url(#khd)" stroke="#372f12" stroke-width="1" stroke-linejoin="round" /><path d="M257.9 123.3L267.0 119.8L272.7 124.7L262.8 129.0Z" fill="url(#bl)" stroke="#5e5430" stroke-width="1" stroke-linejoin="round" /><circle cx="265" cy="124.3" r="0.8" fill="#222" /><path d="M290.2 108.5L302.9 105.7L310.6 113.5L297.3 116.3Z" fill="none" stroke="#9a8f62" stroke-width="2" stroke-linejoin="round" /><path d="M290.2 119.8L306.4 114.9L319.8 124.0L300.8 131.0Z" fill="url(#kh)" stroke="#372f12" stroke-width="1" stroke-linejoin="round" /><path d="M296.5 121.0L306.5 118.0L314.0 123.5L302.5 127.5Z" fill="url(#bl)" stroke="#2d5a88" stroke-width="1" stroke-linejoin="round" /><path d="M326.1 117.4L346.5 109.3L351.4 123.6L339.5 128.5Z" fill="url(#kh)" stroke="#372f12" stroke-width="1" stroke-linejoin="round" /><path d="M351.4 123.6L339.5 128.5" fill="none" stroke="#fff" stroke-width="1.6" /><rect x="324.1" y="115.4" width="4" height="4" fill="#f2ee2a" stroke="#6a6400" stroke-width="0.6" /><rect x="325.5" y="116.80000000000001" width="1.2" height="1.2" fill="#222" /><rect x="344.5" y="107.3" width="4" height="4" fill="#f2ee2a" stroke="#6a6400" stroke-width="0.6" /><rect x="345.9" y="108.7" width="1.2" height="1.2" fill="#222" /><rect x="349.4" y="121.6" width="4" height="4" fill="#f2ee2a" stroke="#6a6400" stroke-width="0.6" /><rect x="350.79999999999995" y="123.0" width="1.2" height="1.2" fill="#222" /><rect x="337.5" y="126.5" width="4" height="4" fill="#f2ee2a" stroke="#6a6400" stroke-width="0.6" /><rect x="338.9" y="127.9" width="1.2" height="1.2" fill="#222" /><path d="M368.3 104.3 A10.5 10.5 0 0 0 368.3 123.3 Z" fill="#7c7b70" stroke="#a8a79c" stroke-width=".8" opacity=".9"/><path d="M361.5 108.5 H368.3 M360 114 H368.3 M361.5 119.5 H368.3 M364.5 105.5 Q362 114 364.5 122" stroke="#3c3b32" stroke-width=".8" fill="none" opacity=".9"/><circle cx="379.8" cy="122.6" r="9.8" fill="url(#khsph)" stroke="#372f12" stroke-width="1" /><path d="M370 122.6H389.6 M379.8 112.8V132.4 M371.5 117.5 Q379.8 120 388.1 117.5 M371.5 127.7 Q379.8 125.2 388.1 127.7 M375 114 Q372 122.6 375 131.2 M384.6 114 Q387.6 122.6 384.6 131.2" stroke="#372f12" stroke-width=".9" fill="none"/><path d="M394.2 117.0L408.0 111.0L423.0 121.0L406.0 129.5Z" fill="url(#kh)" stroke="#372f12" stroke-width="1" stroke-linejoin="round" /><path d="M401.1 114.0L414.5 125.2" fill="none" stroke="#372f12" stroke-width="0.9" /><path d="M400.1 123.2L415.5 116.0" fill="none" stroke="#372f12" stroke-width="0.9" /><path d="M409.0 111.5L409.0 124.0L416.0 128.5L416.0 115.5Z" fill="url(#khv)" stroke="#372f12" stroke-width="1" stroke-linejoin="round" /><path d="M416.0 115.5L416.0 128.5L423.8 123.0L423.8 111.4Z" fill="#8f8456" stroke="#372f12" stroke-width="1" stroke-linejoin="round" /><path d="M409.0 111.2L415.8 107.3L423.8 111.2L416.0 115.5Z" fill="url(#bl)" stroke="#372f12" stroke-width="1" stroke-linejoin="round" /><circle cx="416" cy="111" r="0.8" fill="#222" /><path d="M430.8 112.0L437.5 109.0L441.5 115.0L434.5 118.0Z" fill="#8f8560" stroke="#5e5430" stroke-width="1" stroke-linejoin="round" /><path d="M443.5 107.5L450.0 105.0L455.5 111.0L448.5 113.5Z" fill="#8f8560" stroke="#5e5430" stroke-width="1" stroke-linejoin="round" /><path d="M435.0 124.5L452.0 117.0L459.5 123.0L443.0 131.0Z" fill="url(#kh)" stroke="#372f12" stroke-width="1" stroke-linejoin="round" /><path d="M441.5 121.7L446.5 119.5L453.0 126.2L448.0 128.6Z" fill="url(#bl)" stroke="#fff" stroke-width="0.8" stroke-linejoin="round" /><path d="M463.5 114.0L477.0 108.5L490.0 119.5L474.0 127.0Z" fill="url(#kh)" stroke="#372f12" stroke-width="1" stroke-linejoin="round" /><path d="M470.2 111.2L482.0 123.2" fill="none" stroke="#372f12" stroke-width="0.9" /><path d="M468.8 120.5L483.5 114.0" fill="none" stroke="#372f12" stroke-width="0.9" /><path d="M472.5 111.5L480.5 109.0L492.5 120.5L484.5 124.0Z" fill="none" stroke="#fff" stroke-width="1.2" stroke-linejoin="round" /><path d="M484.5 118.5L484.5 129.5L487.3 127.1L489.5 131.5L491.7 130.5L489.5 126.3L493.1 126.3Z" fill="#b01820" stroke="#fff" stroke-width="1.0" stroke-linejoin="round" /><path d="M498.5 120.0L509.0 115.5L515.5 127.0L505.0 131.5Z" fill="url(#kh)" stroke="#372f12" stroke-width="1" stroke-linejoin="round" /><path d="M512.0 118.0L521.0 114.0L529.5 124.0L520.0 128.5Z" fill="url(#kh)" stroke="#372f12" stroke-width="1" stroke-linejoin="round" /><path d="M500.0 111.0L513.5 106.5L521.5 115.5L507.5 120.0Z" fill="#857b55" stroke="#5e5430" stroke-width="1" stroke-linejoin="round" opacity=".95"/><path d="M536.0 108.0L551.5 105.5L563.5 124.5L541.0 132.0Z" fill="url(#kh)" stroke="#372f12" stroke-width="1" stroke-linejoin="round" /><path d="M541.2 107.2L548.5 129.5" fill="none" stroke="#372f12" stroke-width="0.9" /><path d="M546.3 106.3L556.0 127.0" fill="none" stroke="#372f12" stroke-width="0.9" /><path d="M537.7 116.0L555.5 111.8" fill="none" stroke="#372f12" stroke-width="0.9" /><path d="M539.3 124.0L559.5 118.2" fill="none" stroke="#372f12" stroke-width="0.9" /><path d="M542.5 106.8L552.5 128.5" fill="none" stroke="#f2ee2a" stroke-width="2" /><path d="M540.8 111.5L547.8 109.9" fill="none" stroke="#fff" stroke-width="1.3" /><path d="M544.2 118.9L551.2 117.3" fill="none" stroke="#fff" stroke-width="1.3" /><path d="M547.8 126.7L554.8 125.1" fill="none" stroke="#fff" stroke-width="1.3" /><path d="M568.5 106.5L578.0 103.8L585.5 109.0L585.5 114.5L575.5 118.0L568.5 112.0Z" fill="#7b7250" stroke="#5e5430" stroke-width="1" stroke-linejoin="round" opacity=".85"/><path d="M568.5 106.5L578.0 103.8L585.5 109.0L575.5 112.0Z" fill="#5b5338" stroke="#5e5430" stroke-width="0.8" stroke-linejoin="round" opacity=".85"/><path d="M577.0 121.0L590.5 115.5L598.5 122.5L598.5 128.0L585.0 133.5L577.0 126.5Z" fill="url(#kh)" stroke="#372f12" stroke-width="1" stroke-linejoin="round" /><path d="M577.0 121.0L585.0 127.5L598.5 122.5" fill="none" stroke="#7fb6e0" stroke-width="1.6" /><path d="M585.0 127.5L585.0 133.5" fill="none" stroke="#372f12" stroke-width="1" /><ellipse cx="612" cy="128" rx="9" ry="2.5" fill="#000" opacity=".35"/><path d="M609.5 113.0L621.0 107.5L632.0 111.5L631.0 127.0L621.5 131.5L610.5 127.0Z" fill="url(#kh)" stroke="#372f12" stroke-width="1.2" stroke-linejoin="round" /><path d="M609.5 113.0L620.0 117.0" fill="none" stroke="#372f12" stroke-width="1" /><path d="M625.5 130.0L631.0 127.0" fill="none" stroke="#372f12" stroke-width="1" /><path d="M620.0 117.0L632.0 111.5L625.5 124.5Z" fill="url(#bl)" stroke="#372f12" stroke-width="1" stroke-linejoin="round" /><path d="M620.0 117.0L621.5 131.5" fill="none" stroke="#372f12" stroke-width="1" /><rect x="639" y="119.5" width="30" height="13" fill="#353535" rx="2" /><path d="M653.5 115.0L653.5 104.0" fill="none" stroke="#18c030" stroke-width="2.2" stroke-linecap="round"/><path d="M653.5 115.0L645.5 120.0" fill="none" stroke="#2a3cd8" stroke-width="2.2" stroke-linecap="round"/><path d="M653.5 115.0L662.5 120.0" fill="none" stroke="#e02030" stroke-width="2.2" stroke-linecap="round"/><text x="639" y="129.7" font-size="10" fill="#f0f0f0" font-family="DejaVu Sans Condensed,Liberation Sans,sans-serif" font-weight="bold" textLength="12">CP</text><circle cx="693.5" cy="112.5" r="7" fill="#666" stroke="#555" stroke-width="0.8" opacity=".6"/><path d="M686.5 112.5H700.5 M693.5 105.5V119.5 M688 108.5h11 M688 116.5h11" stroke="#444" stroke-width=".8" opacity=".7"/><circle cx="684" cy="121.5" r="8" fill="url(#wht)" stroke="#e8e8e8" stroke-width="1" /><path d="M676.5 119 H691.5 M676.8 124 H691.2 M679 115.5H689 M679.5 127.5H688.5" stroke="#3a78b8" stroke-width="1.6"/><path d="M684 113.5V129.5 M680 114.5 Q677 121.5 680 128.5 M688 114.5 Q691 121.5 688 128.5" stroke="#3a78b8" stroke-width="1" fill="none"/><path d="M691.5 122.0L691.5 132.4L694.2 130.2L696.2 134.3L698.3 133.4L696.2 129.4L699.7 129.4Z" fill="#b01820" stroke="#fff" stroke-width="1.0" stroke-linejoin="round" /><path d="M710.0 131.5L738.0 104.0" fill="none" stroke="#1a1a1a" stroke-width="1.6" /><path d="M711.0 132.0L739.0 104.5" fill="none" stroke="#777" stroke-width="0.6" /><path d="M709.5 111.5L718.0 108.5L724.0 113.5L715.0 117.5Z" fill="url(#kh)" stroke="#372f12" stroke-width="0.8" stroke-linejoin="round" /><path d="M716.5 112.5L716.5 103.5" fill="none" stroke="#d82838" stroke-width="2" /><path d="M724.0 123.0L733.0 119.5L738.5 124.5L729.5 128.5Z" fill="url(#kh)" stroke="#372f12" stroke-width="0.8" stroke-linejoin="round" /><path d="M731.5 128.0L731.5 134.0" fill="none" stroke="#18c870" stroke-width="2" /><path d="M745.5 105 Q753.25 109 761.0 105 V120 Q753.25 125 745.5 120 Z" fill="url(#khcyl)" stroke="#372f12" stroke-width="1"/><path d="M750.0 106.5L750.0 121.5" fill="none" stroke="#372f12" stroke-width="0.8" /><path d="M755.0 107.0L755.0 122.0" fill="none" stroke="#372f12" stroke-width="0.8" /><path d="M758.5 116.5 Q766.5 120.5 774.5 116.5 V130.5 Q766.5 135.5 758.5 130.5 Z" fill="url(#khcyl)" stroke="#372f12" stroke-width="1"/><path d="M743.9 123.3L752.1 129.2L751.1 131.0L758.5 131.0L754.5 124.7L753.5 126.5L744.1 122.7Z" fill="url(#redg)" /><path d="M780.5 105 Q788.5 109 796.5 105 V120 Q788.5 125 780.5 120 Z" fill="url(#khcyl)" stroke="#372f12" stroke-width="1"/><path d="M794 116.5 Q801.75 120.5 809.5 116.5 V130.5 Q801.75 135.5 794 130.5 Z" fill="url(#khcyl)" stroke="#372f12" stroke-width="1"/><path d="M798.5 118.0L798.5 133.0" fill="none" stroke="#372f12" stroke-width="0.8" /><path d="M804.0 118.5L804.0 133.5" fill="none" stroke="#372f12" stroke-width="0.8" /><path d="M778.4 123.3L787.1 129.3L786.1 131.1L793.5 131.0L789.4 124.8L788.5 126.6L778.6 122.7Z" fill="url(#redg)" /><path d="M815.0 110.0L828.0 105.5L836.0 112.5L822.5 117.5Z" fill="#857b55" stroke="#5e5430" stroke-width="1" stroke-linejoin="round" opacity=".9"/><path d="M815.5 118.5L832.0 112.0L843.5 123.0L824.0 131.5Z" fill="#8b8158" stroke="#4a4225" stroke-width="1" stroke-linejoin="round" /><path d="M823.8 115.2L833.8 127.2" fill="none" stroke="#4a4225" stroke-width="0.9" /><path d="M819.8 125.0L837.8 117.5" fill="none" stroke="#4a4225" stroke-width="0.9" /><rect x="812.5" y="115.5" width="4" height="4" fill="#f2ee2a" stroke="#6a6400" stroke-width="0.6" /><rect x="813.9" y="116.9" width="1.2" height="1.2" fill="#222" /><rect x="821.5" y="112.5" width="4" height="4" fill="#f2ee2a" stroke="#6a6400" stroke-width="0.6" /><rect x="822.9" y="113.9" width="1.2" height="1.2" fill="#222" /><rect x="829.5" y="110.5" width="4" height="4" fill="#f2ee2a" stroke="#6a6400" stroke-width="0.6" /><rect x="830.9" y="111.9" width="1.2" height="1.2" fill="#222" /><rect x="835.5" y="115.5" width="4" height="4" fill="#f2ee2a" stroke="#6a6400" stroke-width="0.6" /><rect x="836.9" y="116.9" width="1.2" height="1.2" fill="#222" /><rect x="827.5" y="118" width="4" height="4" fill="#f2ee2a" stroke="#6a6400" stroke-width="0.6" /><rect x="828.9" y="119.4" width="1.2" height="1.2" fill="#222" /><rect x="817.5" y="122.5" width="4" height="4" fill="#f2ee2a" stroke="#6a6400" stroke-width="0.6" /><rect x="818.9" y="123.9" width="1.2" height="1.2" fill="#222" /><rect x="841.5" y="121.5" width="4" height="4" fill="#f2ee2a" stroke="#6a6400" stroke-width="0.6" /><rect x="842.9" y="122.9" width="1.2" height="1.2" fill="#222" /><rect x="831.5" y="125.5" width="4" height="4" fill="#f2ee2a" stroke="#6a6400" stroke-width="0.6" /><rect x="832.9" y="126.9" width="1.2" height="1.2" fill="#222" /><rect x="822.5" y="129.5" width="4" height="4" fill="#f2ee2a" stroke="#6a6400" stroke-width="0.6" /><rect x="823.9" y="130.9" width="1.2" height="1.2" fill="#222" /><path d="M850.0 109.5L864.0 105.5L871.0 112.0L857.0 116.5Z" fill="#857b55" stroke="#5e5430" stroke-width="1" stroke-linejoin="round" opacity=".9"/><path d="M848.5 119.0L866.0 112.5L879.5 123.5L859.0 132.5Z" fill="#c98758" stroke="#8cc4ec" stroke-width="1.8" stroke-linejoin="round" /><path d="M857.2 115.8L869.2 128.0" fill="none" stroke="#8cc4ec" stroke-width="1.62" /><path d="M853.8 125.8L872.8 118.0" fill="none" stroke="#8cc4ec" stroke-width="1.62" /><path d="M854.2 121.2L857.5 118.4L858.0 121.5Z" fill="#f2ee2a" /><path d="M863.7 117.7L867.0 114.9L867.5 118.0Z" fill="#f2ee2a" /><path d="M858.7 128.2L862.0 125.4L862.5 128.5Z" fill="#f2ee2a" /><path d="M869.2 124.2L872.5 121.4L873.0 124.5Z" fill="#f2ee2a" /><path d="M885.0 109.0L898.5 105.5L906.0 112.5L891.5 116.5Z" fill="#857b55" stroke="#5e5430" stroke-width="1" stroke-linejoin="round" opacity=".9"/><path d="M883.5 119.0L901.5 112.5L914.5 123.5L894.0 132.5Z" fill="#7d7450" stroke="#d28a52" stroke-width="1.8" stroke-linejoin="round" /><path d="M892.5 115.8L904.2 128.0" fill="none" stroke="#d28a52" stroke-width="1.62" /><path d="M888.8 125.8L908.0 118.0" fill="none" stroke="#d28a52" stroke-width="1.62" /><path d="M920.5 104.5L938.5 110.0L938.5 132.0L920.5 125.0Z" fill="#111" /><path d="M921.5 106.0L937.5 110.8L937.5 130.5L921.5 124.0Z" fill="#fff" /><path d="M921.5 106.0L926.8 107.6L926.8 112.2L921.5 110.5Z" fill="#111" /><path d="M921.5 115.0L926.8 116.9L926.8 121.5L921.5 119.5Z" fill="#111" /><path d="M926.8 112.2L932.2 114.0L932.2 118.8L926.8 116.9Z" fill="#111" /><path d="M926.8 121.5L932.2 123.6L932.2 128.3L926.8 126.2Z" fill="#111" /><path d="M932.2 109.2L937.5 110.8L937.5 115.7L932.2 114.0Z" fill="#111" /><path d="M932.2 118.8L937.5 120.7L937.5 125.6L932.2 123.6Z" fill="#111" /><path d="M938 119 Q940 113 945 112.5 V110 L950.5 114.5 L945 119 V116.5 Q942 117 941 120.5 Z" fill="#3aa843" stroke="#1d6a25" stroke-width=".6"/><path d="M918.5 121.5 h7 v2 h-2.3 v5.5 h-2.4 v-5.5 h-2.3z" fill="#4ed050" stroke="#187a20" stroke-width=".7"/><rect x="956.5" y="106" width="27" height="26" fill="url(#wht)" stroke="#f4f4f4" stroke-width="0.8" /><rect x="956.5" y="106" width="27" height="3.2" fill="#5aa0e0" /><path d="M963.5 110.0L977.5 113.8L977.5 131.5L963.5 127.0Z" fill="#111" /><path d="M964.5 111.0L977.0 114.5L977.0 130.5L964.5 126.0Z" fill="#fff" /><path d="M964.5 111.0L968.7 112.2L968.7 116.0L964.5 114.8Z" fill="#111" /><path d="M964.5 118.5L968.7 119.8L968.7 123.7L964.5 122.2Z" fill="#111" /><path d="M968.7 116.0L972.8 117.2L972.8 121.2L968.7 119.8Z" fill="#111" /><path d="M968.7 123.7L972.8 125.1L972.8 129.0L968.7 127.5Z" fill="#111" /><path d="M972.8 113.3L977.0 114.5L977.0 118.5L972.8 117.2Z" fill="#111" /><path d="M972.8 121.2L977.0 122.5L977.0 126.5L972.8 125.1Z" fill="#111" /><path d="M960.0 122 h6.5 v2 h-2.1 v5 h-2.3 v-5 h-2.1z" fill="#4ed050" stroke="#187a20" stroke-width=".7"/><rect x="1061.7" y="106" width="27" height="26" fill="url(#wht)" stroke="#f4f4f4" stroke-width="0.8" /><rect x="1061.7" y="106" width="27" height="3.2" fill="#5aa0e0" /><path d="M1068.7 110.0L1082.7 113.8L1082.7 131.5L1068.7 127.0Z" fill="#111" /><path d="M1069.7 111.0L1082.2 114.5L1082.2 130.5L1069.7 126.0Z" fill="#fff" /><path d="M1069.7 111.0L1073.9 112.2L1073.9 116.0L1069.7 114.8Z" fill="#111" /><path d="M1069.7 118.5L1073.9 119.8L1073.9 123.7L1069.7 122.2Z" fill="#111" /><path d="M1073.9 116.0L1078.0 117.2L1078.0 121.2L1073.9 119.8Z" fill="#111" /><path d="M1073.9 123.7L1078.0 125.1L1078.0 129.0L1073.9 127.5Z" fill="#111" /><path d="M1078.0 113.3L1082.2 114.5L1082.2 118.5L1078.0 117.2Z" fill="#111" /><path d="M1078.0 121.2L1082.2 122.5L1082.2 126.5L1078.0 125.1Z" fill="#111" /><path d="M1065.2 122 h6.5 v2 h-2.1 v5 h-2.3 v-5 h-2.1z" fill="#4ed050" stroke="#187a20" stroke-width=".7"/><g transform="translate(996.5 102.5) scale(1.08)" opacity="1"><path d="M0.5 6.5 L12.5 2 L14 5 L2 9.8 Z" fill="#3c3c3c" stroke="#222" stroke-width=".6"/><path d="M3 5.6l2.2-.8 1 2.2-2.2.9z M7.2 4l2.2-.8 1 2.2-2.2.9z M11.2 2.5l1.3-.5.9 2.1-1.2.5z" fill="#e8e8e8"/><path d="M2 10 H14.5 V19 H2 Z" fill="#6c6c6c" stroke="#2a2a2a" stroke-width=".7"/></g><rect x="989.5" y="119.5" width="29" height="13" fill="#353535" rx="2" /><text x="989.2" y="129.7" font-size="10" fill="#f0f0f0" font-family="DejaVu Sans Condensed,Liberation Sans,sans-serif" font-weight="bold" textLength="19.5">RCF</text><path d="M1028.0 105.5L1049.5 105.5L1049.5 117.0L1045.5 121.0L1028.0 121.0Z" fill="url(#wht)" stroke="#ddd" stroke-width="0.6" stroke-linejoin="round" /><path d="M1036.0 113.5L1045.0 104.0L1047.8 106.5L1038.8 116.0Z" fill="#e0a040" stroke="#7a4a10" stroke-width="0.6" stroke-linejoin="round" /><path d="M1045.0 104.0L1046.2 102.8L1049.0 105.3L1047.8 106.5Z" fill="#e8506a" /><path d="M1036.0 113.5L1038.8 116.0L1034.6 117.2Z" fill="#222" /><rect x="1024.5" y="119.5" width="29" height="13" fill="#353535" rx="2" /><text x="1024.2" y="129.7" font-size="10" fill="#f0f0f0" font-family="DejaVu Sans Condensed,Liberation Sans,sans-serif" font-weight="bold" textLength="15.5">His</text><g transform="translate(1087.5 -760.3) translate(13 863) scale(0.8) translate(-13 -863)"><path d="M13 863.3 C24.5 863.5 33 872 31.3 886.5 C30 877.5 25.5 870.5 17 867.3 C15.5 866 14 864.8 13 863.3 Z" fill="#e8e8e8"/><path d="M18 868.8 C24.5 872 28 878.5 26.3 887 C25 880.5 22 876 17.3 873.6 C17.8 872 18 870.4 18 868.8 Z" fill="#d8d8d8"/><path d="M16.6 868.6 C13.8 872.5 13.2 877.5 15.6 882 C16 879.3 17.6 877.6 19.8 876.8 C17.6 874.8 16.6 872 16.6 868.6 Z" fill="#e0e0e0"/><path d="M25.6 881.2 A3.5 3.5 0 1 0 25.6 885.6" stroke="#e8e8e8" stroke-width="1.7" fill="none"/><path d="M19.5 866.5 C25.5 869.5 29.3 875.5 29.8 883" stroke="#555" stroke-width=".7" fill="none"/></g><rect x="1093.5" y="119.5" width="31" height="13" fill="#353535" rx="2" /><text x="1093.7" y="130" font-size="11" fill="#f0f0f0" font-family="DejaVu Sans Condensed,Liberation Sans,sans-serif" font-weight="bold" textLength="30.5">Refre</text><g transform="translate(1122.5 -760.3) translate(13 863) scale(0.8) translate(-13 -863)"><path d="M13 863.3 C24.5 863.5 33 872 31.3 886.5 C30 877.5 25.5 870.5 17 867.3 C15.5 866 14 864.8 13 863.3 Z" fill="#e8e8e8"/><path d="M18 868.8 C24.5 872 28 878.5 26.3 887 C25 880.5 22 876 17.3 873.6 C17.8 872 18 870.4 18 868.8 Z" fill="#d8d8d8"/><path d="M16.6 868.6 C13.8 872.5 13.2 877.5 15.6 882 C16 879.3 17.6 877.6 19.8 876.8 C17.6 874.8 16.6 872 16.6 868.6 Z" fill="#e0e0e0"/><path d="M25.6 881.2 A3.5 3.5 0 1 0 25.6 885.6" stroke="#e8e8e8" stroke-width="1.7" fill="none"/><path d="M19.5 866.5 C25.5 869.5 29.3 875.5 29.8 883" stroke="#555" stroke-width=".7" fill="none"/></g></svg>
<svg class="a" style="left:5px;top:153px;" width="36" height="6" viewBox="0 0 36 6"><rect x="0" y="1" width="1.5" height="1.5" fill="#2e2e2e"/><rect x="1" y="0" width="1.6" height="1.6" fill="#747474"/><rect x="3" y="4" width="1.5" height="1.5" fill="#2e2e2e"/><rect x="4" y="3" width="1.6" height="1.6" fill="#747474"/><rect x="6" y="1" width="1.5" height="1.5" fill="#2e2e2e"/><rect x="7" y="0" width="1.6" height="1.6" fill="#747474"/><rect x="9" y="4" width="1.5" height="1.5" fill="#2e2e2e"/><rect x="10" y="3" width="1.6" height="1.6" fill="#747474"/><rect x="12" y="1" width="1.5" height="1.5" fill="#2e2e2e"/><rect x="13" y="0" width="1.6" height="1.6" fill="#747474"/><rect x="15" y="4" width="1.5" height="1.5" fill="#2e2e2e"/><rect x="16" y="3" width="1.6" height="1.6" fill="#747474"/><rect x="18" y="1" width="1.5" height="1.5" fill="#2e2e2e"/><rect x="19" y="0" width="1.6" height="1.6" fill="#747474"/><rect x="21" y="4" width="1.5" height="1.5" fill="#2e2e2e"/><rect x="22" y="3" width="1.6" height="1.6" fill="#747474"/><rect x="24" y="1" width="1.5" height="1.5" fill="#2e2e2e"/><rect x="25" y="0" width="1.6" height="1.6" fill="#747474"/><rect x="27" y="4" width="1.5" height="1.5" fill="#2e2e2e"/><rect x="28" y="3" width="1.6" height="1.6" fill="#747474"/><rect x="30" y="1" width="1.5" height="1.5" fill="#2e2e2e"/><rect x="31" y="0" width="1.6" height="1.6" fill="#747474"/><rect x="33" y="4" width="1.5" height="1.5" fill="#2e2e2e"/><rect x="34" y="3" width="1.6" height="1.6" fill="#747474"/></svg>
<div class="a" style="left:43px;top:146px;width:1px;height:750px;background:#2f2f2f;"></div>
<div class="a" style="left:44px;top:146px;width:1px;height:750px;background:#4a4a4a;"></div>
<div class="a" style="left:3px;top:536px;width:1px;height:321px;background:#585858;"></div>
<div class="a" style="left:3px;top:856.5px;width:39px;height:1px;background:#585858;"></div>
<div class="a" style="left:41px;top:536px;width:1px;height:321px;background:#505050;"></div>
<div class="a" style="left:4px;top:159px;width:36px;height:36px;background:#a9a9a9;border:1px solid #2a2a2a;border-radius:2px;"></div>
<div class="a" style="left:4px;top:196px;width:36px;height:36px;background:#464646;border:1px solid #2b2b2b;border-radius:2px;box-shadow:inset 0 0 0 1px #535353;"></div>
<div class="a" style="left:4px;top:233px;width:36px;height:36px;background:#464646;border:1px solid #2b2b2b;border-radius:2px;box-shadow:inset 0 0 0 1px #535353;"></div>
<div class="a" style="left:4px;top:270px;width:36px;height:36px;background:#464646;border:1px solid #2b2b2b;border-radius:2px;box-shadow:inset 0 0 0 1px #535353;"></div>
<div class="a" style="left:4px;top:307px;width:36px;height:36px;background:#464646;border:1px solid #2b2b2b;border-radius:2px;box-shadow:inset 0 0 0 1px #535353;"></div>
<div class="a" style="left:4px;top:344px;width:36px;height:36px;background:#464646;border:1px solid #2b2b2b;border-radius:2px;box-shadow:inset 0 0 0 1px #535353;"></div>
<div class="a" style="left:4px;top:381px;width:36px;height:36px;background:#464646;border:1px solid #2b2b2b;border-radius:2px;box-shadow:inset 0 0 0 1px #535353;"></div>
<div class="a" style="left:4px;top:418px;width:36px;height:36px;background:#464646;border:1px solid #2b2b2b;border-radius:2px;box-shadow:inset 0 0 0 1px #535353;"></div>
<div class="a" style="left:4px;top:455px;width:36px;height:36px;background:#464646;border:1px solid #2b2b2b;border-radius:2px;box-shadow:inset 0 0 0 1px #535353;"></div>
<div class="a" style="left:4px;top:492px;width:36px;height:36px;background:#464646;border:1px solid #2b2b2b;border-radius:2px;box-shadow:inset 0 0 0 1px #535353;"></div>
<svg class="a" style="left:0;top:146px;will-change:transform" width="46" height="750" viewBox="0 146 46 750"><path d="M17.3 168.2L17.3 184.1L21.4 180.7L24.6 187.0L27.7 185.6L24.6 179.5L29.8 179.5Z" fill="#a3161e" stroke="#fff" stroke-width="1.0" stroke-linejoin="round" /><path d="M13 206 Q16 201 22 201.5 Q28 202 29.5 207 Q30 212 27.5 215 Q28.5 221 25 224 Q18 227 12.5 222 Q10 218 13.5 214 Q10.5 210 13 206 Z" fill="none" stroke="#b8b8b8" stroke-width="1.3" stroke-dasharray="4 2.2"/><path d="M24.0 209.5L24.0 223.2L27.5 220.2L30.2 225.8L33.0 224.5L30.2 219.2L34.8 219.2Z" fill="#a3161e" stroke="#fff" stroke-width="1.0" stroke-linejoin="round" /><ellipse cx="19.5" cy="256.5" rx="10.5" ry="6.3" fill="none" stroke="#d01828" stroke-width="2" /><path d="M34.5 240.8L24.5 250.8" fill="none" stroke="#7a4a20" stroke-width="2.6" stroke-linecap="round"/><path d="M25.5 249.5 Q21 250.5 18.5 254.5 Q16 257 13.5 257.5 Q18 259.5 22 257 Q25.5 254.5 26.5 250.5 Z" fill="#f0e8d0" stroke="#6a5a30" stroke-width=".6"/><rect x="11.5" y="249.5" width="4" height="4" fill="#f2ee2a" stroke="#6a6400" stroke-width="0.6" /><rect x="12.9" y="250.9" width="1.2" height="1.2" fill="#222" /><rect x="11.5" y="258" width="4" height="4" fill="#f2ee2a" stroke="#6a6400" stroke-width="0.6" /><rect x="12.9" y="259.4" width="1.2" height="1.2" fill="#222" /><rect x="20.5" y="258.2" width="4" height="4" fill="#f2ee2a" stroke="#6a6400" stroke-width="0.6" /><rect x="21.9" y="259.59999999999997" width="1.2" height="1.2" fill="#222" /><path d="M19.0 277.0L13.5 293.0L23.0 294.0Z" fill="#9a9a9a" opacity=".55"/><path d="M22.5 277.0L17.0 293.5L27.0 295.0Z" fill="#8a8a8a" opacity=".7"/><path d="M25.8 276.6 L20.5 293 A7.6 3.3 0 0 0 35.5 293 Z" fill="url(#bsph)"/><path d="M7.4 289.6L23.6 298.7L22.4 301.0L29.8 300.8L25.7 294.6L24.5 296.9L7.6 289.0Z" fill="url(#redg)" /><path d="M10.5 323 A11 8 0 0 0 9.5 330.5 L12.5 335 L15 331 A6 4 0 0 1 13.8 325.5 Z" fill="url(#redg)"/><path d="M31.5 323.5 A10 8 0 0 1 22.5 338.5 L22.5 341 L17.8 337 L22.5 333 L22.5 335.3 A6 5 0 0 0 28.5 326 Z" fill="url(#redg)"/><circle cx="21.6" cy="320.8" r="9" fill="url(#bsph)" /><path d="M21.2 362.3L13.6 354.1" fill="none" stroke="#c8202c" stroke-width="2.6" /><path d="M16.5 351.4L8.8 349.0L10.6 356.8Z" fill="#c8202c" /><path d="M21.2 362.3L29.6 353.9" fill="none" stroke="#c8202c" stroke-width="2.6" /><path d="M32.4 356.8L34.5 349.0L26.7 351.1Z" fill="#c8202c" /><path d="M21.2 362.3L13.6 370.2" fill="none" stroke="#c8202c" stroke-width="2.6" /><path d="M10.7 367.5L8.8 375.3L16.5 373.0Z" fill="#c8202c" /><path d="M21.2 362.3L29.5 370.4" fill="none" stroke="#c8202c" stroke-width="2.6" /><path d="M26.7 373.3L34.5 375.3L32.3 367.5Z" fill="#c8202c" /><path d="M14.5 358.6L22.8 357.1L28.0 359.1L19.7 361.2Z" fill="#a8d0f4" /><path d="M14.5 358.6L19.7 361.2L19.7 369.5L14.5 366.7Z" fill="#5a9ae0" /><path d="M19.7 361.2L28.0 359.1L28.0 367.4L19.7 369.5Z" fill="#2f6cb8" /><path d="M9.5 391.0L21.5 386.5L34.5 391.0L34.5 407.0L21.5 411.5L9.5 407.0Z" fill="none" stroke="#c8c8c8" stroke-width="1.2" stroke-linejoin="round" /><path d="M9.5 391.0L21.5 395.0L34.5 391.0" fill="none" stroke="#c8c8c8" stroke-width="1.2" /><path d="M21.5 395.0L21.5 411.5" fill="none" stroke="#c8c8c8" stroke-width="1.2" /><path d="M21.5 386.5L21.5 395.0" fill="none" stroke="#c8c8c8" stroke-width="0.8" /><circle cx="21.6" cy="402" r="5" fill="url(#bsph)" /><path d="M21.6 399.0L21.6 394.0" fill="none" stroke="#18b030" stroke-width="2" /><path d="M24.4 394.0L21.6 389.5L18.8 394.0Z" fill="#18b030" /><path d="M18.0 403.5L15.7 404.4" fill="none" stroke="#2030e0" stroke-width="2" /><path d="M14.8 402.1L11.5 406.0L16.6 406.7Z" fill="#2030e0" /><path d="M25.5 403.5L28.9 405.0" fill="none" stroke="#e02020" stroke-width="2" /><path d="M27.9 407.3L33.0 406.8L29.9 402.7Z" fill="#e02020" /><rect x="7.5" y="389" width="4" height="4" fill="#f2ee2a" stroke="#6a6400" stroke-width="0.6" /><rect x="8.9" y="390.4" width="1.2" height="1.2" fill="#222" /><rect x="19.5" y="384.8" width="4" height="4" fill="#f2ee2a" stroke="#6a6400" stroke-width="0.6" /><rect x="20.9" y="386.2" width="1.2" height="1.2" fill="#222" /><rect x="32.5" y="389" width="4" height="4" fill="#f2ee2a" stroke="#6a6400" stroke-width="0.6" /><rect x="33.9" y="390.4" width="1.2" height="1.2" fill="#222" /><rect x="32.5" y="405" width="4" height="4" fill="#f2ee2a" stroke="#6a6400" stroke-width="0.6" /><rect x="33.9" y="406.4" width="1.2" height="1.2" fill="#222" /><rect x="19.5" y="409.5" width="4" height="4" fill="#f2ee2a" stroke="#6a6400" stroke-width="0.6" /><rect x="20.9" y="410.9" width="1.2" height="1.2" fill="#222" /><rect x="7.5" y="405" width="4" height="4" fill="#f2ee2a" stroke="#6a6400" stroke-width="0.6" /><rect x="8.9" y="406.4" width="1.2" height="1.2" fill="#222" /><path d="M11.5 436 Q21 431 32 435.5 L34.5 446.5 Q22 442.5 10.5 448.5 Z" fill="#4a90d0" stroke="#1e4a80" stroke-width=".7"/><path d="M11.2 440 Q21.5 435 32.8 439.5 M10.8 444 Q21.8 439 33.6 443 M16 433.8 L16.5 445.5 M22 432.8 L22.8 443.5 M27.5 433.8 L29 444.5" stroke="#a8d4f8" stroke-width=".7" fill="none"/><path d="M21.6 432.0L21.6 427.0" fill="none" stroke="#e02020" stroke-width="1.8" /><path d="M24.4 427.0L21.6 421.5L18.8 427.0Z" fill="#e02020" /><rect x="19.6" y="430.5" width="4" height="4" fill="#f2ee2a" stroke="#6a6400" stroke-width="0.6" /><rect x="21.0" y="431.9" width="1.2" height="1.2" fill="#222" /><rect x="15.5" y="437.5" width="4" height="4" fill="#f2ee2a" stroke="#6a6400" stroke-width="0.6" /><rect x="16.9" y="438.9" width="1.2" height="1.2" fill="#222" /><rect x="24.5" y="437.3" width="4" height="4" fill="#f2ee2a" stroke="#6a6400" stroke-width="0.6" /><rect x="25.9" y="438.7" width="1.2" height="1.2" fill="#222" /><path d="M22.4 474.0L22.4 465.0" fill="none" stroke="#222" stroke-width="1.6" /><path d="M22.4 474.0L13.0 474.7" fill="none" stroke="#222" stroke-width="1.6" /><path d="M22.4 474.0L29.0 480.5" fill="none" stroke="#222" stroke-width="1.6" /><circle cx="21.6" cy="474.3" r="4" fill="url(#bsph)" /><path d="M22.4 459.3L19.5 466.5L25.3 466.5Z" fill="#20c040" stroke="#0a7a20" stroke-width="0.5" stroke-linejoin="round" /><path d="M7.0 474.8L14.0 471.8L14.0 477.8Z" fill="#2838e0" stroke="#101a90" stroke-width="0.5" stroke-linejoin="round" /><path d="M33.0 484.0L26.0 481.5L30.0 477.0Z" fill="#e02828" stroke="#8a0a10" stroke-width="0.5" stroke-linejoin="round" /><ellipse cx="21" cy="516" rx="11" ry="5" fill="#000" opacity=".3"/><circle cx="24.8" cy="510.9" r="11.8" fill="url(#ksph2)" stroke="#222" stroke-width="0.8" /><path d="M13 510.9H36.6 M24.8 499.1V522.7 M14.5 505 Q24.8 508 35.1 505 M14.5 516.8 Q24.8 513.8 35.1 516.8 M19 500.6 Q15 510.9 19 521.2 M30.6 500.6 Q34.6 510.9 30.6 521.2" stroke="#1e1a0a" stroke-width=".9" fill="none"/><rect x="6" y="541.5" width="32" height="33" fill="url(#btn)" stroke="#2a2a2a" stroke-width="0.6" rx="2.5" /><path d="M10.7 557.2L22.0 549.4L33.3 557.2L22.0 565.0Z" fill="none" stroke="#222" stroke-width="1.2" stroke-linejoin="round" /><path d="M16.4 553.3L27.6 561.1" fill="none" stroke="#222" stroke-width="1.2" /><path d="M16.4 561.1L27.6 553.3" fill="none" stroke="#222" stroke-width="1.2" /><path d="M13.0 569.0L13.0 563.8" fill="none" stroke="#10b030" stroke-width="1.8900000000000001" /><path d="M13.0 569.0L8.8 572.1" fill="none" stroke="#2030e0" stroke-width="1.8900000000000001" /><path d="M13.0 569.0L17.7 572.1" fill="none" stroke="#e02020" stroke-width="1.8900000000000001" /><rect x="6" y="580" width="15.5" height="15.5" fill="url(#btn)" stroke="#2a2a2a" stroke-width="0.6" rx="1.5" /><rect x="22.5" y="580" width="15.5" height="15.5" fill="url(#btn)" stroke="#2a2a2a" stroke-width="0.6" rx="1.5" /><rect x="6" y="596.5" width="15.5" height="15.5" fill="url(#btn)" stroke="#2a2a2a" stroke-width="0.6" rx="1.5" /><rect x="22.5" y="596.5" width="15.5" height="15.5" fill="url(#btn)" stroke="#2a2a2a" stroke-width="0.6" rx="1.5" /><path d="M8.0 587.7L19.5 587.7" fill="none" stroke="#3a3a3a" stroke-width="1.6" /><path d="M13.7 582.0L13.7 593.5" fill="none" stroke="#3a3a3a" stroke-width="1.6" /><path d="M8.0 604.2L19.5 604.2" fill="none" stroke="#3a3a3a" stroke-width="1.6" /><path d="M13.7 598.5L13.7 610.0" fill="none" stroke="#3a3a3a" stroke-width="1.6" /><path d="M24.5 604.2L36.0 604.2" fill="none" stroke="#3a3a3a" stroke-width="1.6" /><path d="M30.2 598.5L30.2 610.0" fill="none" stroke="#3a3a3a" stroke-width="1.6" /><path d="M23.6 586.5L30.2 582.1L36.8 586.5L30.2 590.9Z" fill="none" stroke="#222" stroke-width="1" stroke-linejoin="round" /><path d="M26.9 584.3L33.5 588.7" fill="none" stroke="#222" stroke-width="1" /><path d="M26.9 588.7L33.5 584.3" fill="none" stroke="#222" stroke-width="1" /><path d="M26.3 593.0L26.3 589.9" fill="none" stroke="#10b030" stroke-width="1.116" /><path d="M26.3 593.0L23.8 594.9" fill="none" stroke="#2030e0" stroke-width="1.116" /><path d="M26.3 593.0L29.1 594.9" fill="none" stroke="#e02020" stroke-width="1.116" /><rect x="6" y="617" width="15.5" height="33" fill="#2b2b2b" stroke="#222" stroke-width="0.6" rx="1.5" /><path d="M8.0 621.5L18.0 621.5" fill="none" stroke="#e0e0e0" stroke-width="1" /><path d="M8.0 625.3L10.0 625.3" fill="none" stroke="#e0e0e0" stroke-width="1" /><path d="M12.0 625.3L16.0 625.3" fill="none" stroke="#e0e0e0" stroke-width="1" /><path d="M8.0 628.5L10.0 628.5" fill="none" stroke="#e0e0e0" stroke-width="1" /><path d="M12.0 628.5L18.0 628.5" fill="none" stroke="#e0e0e0" stroke-width="1" /><path d="M8.0 631.7L10.0 631.7" fill="none" stroke="#e0e0e0" stroke-width="1" /><path d="M12.0 631.7L16.0 631.7" fill="none" stroke="#e0e0e0" stroke-width="1" /><path d="M8.0 634.9L10.0 634.9" fill="none" stroke="#e0e0e0" stroke-width="1" /><path d="M12.0 634.9L18.0 634.9" fill="none" stroke="#e0e0e0" stroke-width="1" /><path d="M8.0 638.1L10.0 638.1" fill="none" stroke="#e0e0e0" stroke-width="1" /><path d="M12.0 638.1L16.0 638.1" fill="none" stroke="#e0e0e0" stroke-width="1" /><path d="M8.0 641.3L10.0 641.3" fill="none" stroke="#e0e0e0" stroke-width="1" /><path d="M12.0 641.3L18.0 641.3" fill="none" stroke="#e0e0e0" stroke-width="1" /><rect x="22.5" y="617" width="15.5" height="33" fill="url(#btn)" stroke="#2a2a2a" stroke-width="0.6" rx="1.5" /><path d="M23.6 632.0L30.2 627.6L36.8 632.0L30.2 636.4Z" fill="none" stroke="#222" stroke-width="1" stroke-linejoin="round" /><path d="M26.9 629.8L33.5 634.2" fill="none" stroke="#222" stroke-width="1" /><path d="M26.9 634.2L33.5 629.8" fill="none" stroke="#222" stroke-width="1" /><path d="M26.3 646.0L26.3 642.9" fill="none" stroke="#10b030" stroke-width="1.116" /><path d="M26.3 646.0L23.8 647.9" fill="none" stroke="#2030e0" stroke-width="1.116" /><path d="M26.3 646.0L29.1 647.9" fill="none" stroke="#e02020" stroke-width="1.116" /><rect x="6" y="655.6" width="32" height="16.6" fill="url(#btn)" stroke="#2a2a2a" stroke-width="0.6" rx="1.5" /><path d="M11.5 663.5L22.0 657.9L32.5 663.5L22.0 669.1Z" fill="none" stroke="#222" stroke-width="1.1" stroke-linejoin="round" /><path d="M16.8 660.7L27.2 666.3" fill="none" stroke="#222" stroke-width="1.1" /><path d="M16.8 666.3L27.2 660.7" fill="none" stroke="#222" stroke-width="1.1" /><path d="M10.0 669.0L10.0 665.9" fill="none" stroke="#10b030" stroke-width="1.116" /><path d="M10.0 669.0L7.5 670.9" fill="none" stroke="#2030e0" stroke-width="1.116" /><path d="M10.0 669.0L12.8 670.9" fill="none" stroke="#e02020" stroke-width="1.116" /><rect x="6" y="673.2" width="32" height="14.6" fill="#f4f4f4" stroke="#2a2a2a" stroke-width="0.5" rx="1.2" /><rect x="12.3" y="673.6" width="25.3" height="13.799999999999999" fill="url(#btn)" /><path d="M12.3 682.3L37.6 682.3" fill="none" stroke="#555" stroke-width="0.7" /><path d="M19.4 672.6L19.4 688.0" fill="none" stroke="#e01818" stroke-width="1.1" /><path d="M15 680.9000000000001 C17 677.7 18 676.5 19.4 676.5 C22.5 676.5 24 685.2 27 685.2 C30 685.2 32 681.2 34.7 678.8000000000001" stroke="#3f6fb0" stroke-width="1.3" fill="none"/><path d="M7.6 675.8L10.4 675.8" fill="none" stroke="#2848c0" stroke-width="1" /><path d="M7.6 678.8L10.4 678.8" fill="none" stroke="#e02020" stroke-width="1" /><path d="M7.6 681.8L10.4 681.8" fill="none" stroke="#20a030" stroke-width="1" /><rect x="6" y="694" width="15.3" height="32" fill="#2b2b2b" stroke="#222" stroke-width="0.6" rx="1.5" /><rect x="6.3" y="694.3" width="3.6" height="31.4" fill="#777" /><path d="M7.0 696.0L9.2 696.0" fill="none" stroke="#3a3a3a" stroke-width="0.9" /><path d="M7.0 699.0L9.2 699.0" fill="none" stroke="#3a3a3a" stroke-width="0.9" /><path d="M7.0 702.0L9.2 702.0" fill="none" stroke="#3a3a3a" stroke-width="0.9" /><path d="M7.0 705.0L9.2 705.0" fill="none" stroke="#3a3a3a" stroke-width="0.9" /><path d="M7.0 708.0L9.2 708.0" fill="none" stroke="#3a3a3a" stroke-width="0.9" /><path d="M7.0 711.0L9.2 711.0" fill="none" stroke="#3a3a3a" stroke-width="0.9" /><path d="M7.0 714.0L9.2 714.0" fill="none" stroke="#3a3a3a" stroke-width="0.9" /><path d="M7.0 717.0L9.2 717.0" fill="none" stroke="#3a3a3a" stroke-width="0.9" /><path d="M7.0 720.0L9.2 720.0" fill="none" stroke="#3a3a3a" stroke-width="0.9" /><path d="M7.0 723.0L9.2 723.0" fill="none" stroke="#3a3a3a" stroke-width="0.9" /><rect x="12" y="695.8" width="2.8" height="2.8" fill="#333" stroke="#a0a0a0" stroke-width="0.9" /><rect x="17" y="695.8" width="2.8" height="2.8" fill="#333" stroke="#a0a0a0" stroke-width="0.9" /><rect x="12" y="699.8" width="2.8" height="2.8" fill="#333" stroke="#f07080" stroke-width="0.9" /><rect x="17" y="699.8" width="2.8" height="2.8" fill="#333" stroke="#f07080" stroke-width="0.9" /><rect x="12" y="703.8" width="2.8" height="2.8" fill="#333" stroke="#50d050" stroke-width="0.9" /><rect x="17" y="703.8" width="2.8" height="2.8" fill="#333" stroke="#50d050" stroke-width="0.9" /><rect x="13" y="714" width="6" height="6" fill="#2f5a2f" stroke="#50d050" stroke-width="1.1" /><path d="M12.5 721.8L19.5 721.8" fill="none" stroke="#e0e0e0" stroke-width="1" /><rect x="22.3" y="694" width="15.8" height="32" fill="url(#btn)" stroke="#2a2a2a" stroke-width="0.6" rx="1.5" /><path d="M23.6 708.5L30.2 704.1L36.8 708.5L30.2 712.9Z" fill="none" stroke="#222" stroke-width="1" stroke-linejoin="round" /><path d="M26.9 706.3L33.5 710.7" fill="none" stroke="#222" stroke-width="1" /><path d="M26.9 710.7L33.5 706.3" fill="none" stroke="#222" stroke-width="1" /><path d="M26.3 722.5L26.3 719.4" fill="none" stroke="#10b030" stroke-width="1.116" /><path d="M26.3 722.5L23.8 724.4" fill="none" stroke="#2030e0" stroke-width="1.116" /><path d="M26.3 722.5L29.1 724.4" fill="none" stroke="#e02020" stroke-width="1.116" /><rect x="6" y="732" width="15.3" height="15.6" fill="url(#btn)" stroke="#2a2a2a" stroke-width="0.6" rx="1.5" /><path d="M7.3 737.5L13.7 733.5L20.1 737.5L13.7 741.5Z" fill="none" stroke="#222" stroke-width="1" stroke-linejoin="round" /><path d="M10.5 735.5L16.9 739.5" fill="none" stroke="#222" stroke-width="1" /><path d="M10.5 739.5L16.9 735.5" fill="none" stroke="#222" stroke-width="1" /><path d="M10.0 744.3L10.0 741.2" fill="none" stroke="#10b030" stroke-width="1.116" /><path d="M10.0 744.3L7.5 746.2" fill="none" stroke="#2030e0" stroke-width="1.116" /><path d="M10.0 744.3L12.8 746.2" fill="none" stroke="#e02020" stroke-width="1.116" /><rect x="22.3" y="732" width="15.8" height="15.6" fill="#2b2b2b" stroke="#222" stroke-width="0.6" rx="1.5" /><rect x="24.3" y="734.3" width="6.3" height="2.6" fill="#5a5a30" stroke="#f0e860" stroke-width="0.9" /><rect x="27.3" y="738.3" width="6.3" height="2.6" fill="#444" stroke="#c8c8c8" stroke-width="0.9" /><rect x="30.3" y="742.3" width="6.3" height="2.6" fill="#444" stroke="#c8c8c8" stroke-width="0.9" /><path d="M25.5 737.0L25.5 739.6L27.3 739.6" fill="none" stroke="#aaa" stroke-width="0.7" /><path d="M28.5 741.0L28.5 743.6L30.3 743.6" fill="none" stroke="#aaa" stroke-width="0.7" /><rect x="6" y="749" width="32" height="15" fill="#f4f4f4" stroke="#2a2a2a" stroke-width="0.5" rx="1.2" /><rect x="12.3" y="749.4" width="25.3" height="14.2" fill="url(#btn)" /><path d="M12.3 758.3L37.6 758.3" fill="none" stroke="#555" stroke-width="0.7" /><path d="M19.4 748.4L19.4 764.2" fill="none" stroke="#e01818" stroke-width="1.1" /><path d="M15 756.7 C17 753.5 18 752.3 19.4 752.3 C22.5 752.3 24 761 27 761 C30 761 32 757 34.7 754.6" stroke="#3f6fb0" stroke-width="1.3" fill="none"/><path d="M7.6 751.6L10.4 751.6" fill="none" stroke="#2848c0" stroke-width="1" /><path d="M7.6 754.6L10.4 754.6" fill="none" stroke="#e02020" stroke-width="1" /><path d="M7.6 757.6L10.4 757.6" fill="none" stroke="#20a030" stroke-width="1" /><rect x="5" y="768" width="32" height="31.5" fill="#444" stroke="#5c5c5c" stroke-width="1" rx="0.5" /><rect x="4" y="767" width="34" height="33.5" fill="none" stroke="#303030" stroke-width="1" rx="1" /><path d="M18.3 782.0L22.7 782.0L20.5 785.0Z" fill="#666" stroke="#b0b0b0" stroke-width="0.6" stroke-linejoin="round" /><defs><linearGradient id="mlg" x1="0" y1="1" x2="1" y2="0"><stop offset="0" stop-color="#222"/><stop offset=".5" stop-color="#3c3c3c"/><stop offset="1" stop-color="#707070"/></linearGradient></defs><rect x="6.6" y="859.7" width="30.7" height="30.2" fill="url(#mlg)" stroke="#202020" stroke-width="1" rx="4" /><rect x="7.6" y="860.7" width="28.7" height="28.2" fill="none" stroke="#5c5c5c" stroke-width="0.7" rx="3.3" /><g transform="translate(0 0) translate(13 863) scale(1) translate(-13 -863)"><path d="M13 863.3 C24.5 863.5 33 872 31.3 886.5 C30 877.5 25.5 870.5 17 867.3 C15.5 866 14 864.8 13 863.3 Z" fill="#e8e8e8"/><path d="M18 868.8 C24.5 872 28 878.5 26.3 887 C25 880.5 22 876 17.3 873.6 C17.8 872 18 870.4 18 868.8 Z" fill="#d8d8d8"/><path d="M16.6 868.6 C13.8 872.5 13.2 877.5 15.6 882 C16 879.3 17.6 877.6 19.8 876.8 C17.6 874.8 16.6 872 16.6 868.6 Z" fill="#e0e0e0"/><path d="M25.6 881.2 A3.5 3.5 0 1 0 25.6 885.6" stroke="#e8e8e8" stroke-width="1.7" fill="none"/><path d="M19.5 866.5 C25.5 869.5 29.3 875.5 29.8 883" stroke="#555" stroke-width=".7" fill="none"/></g></svg>
<div class="a" style="left:46px;top:147px;width:998px;height:748px;border:1px solid #858585;"></div>
<div class="t" style="left:55px;top:151px;font-size:11px;color:#d6d6d6;letter-spacing:-0.615px;">View</div>
<div class="t" style="left:92px;top:151px;font-size:11px;color:#d6d6d6;letter-spacing:-0.316px;">Shading</div>
<div class="t" style="left:144px;top:151px;font-size:11px;color:#d6d6d6;letter-spacing:-0.250px;">Lighting</div>
<div class="t" style="left:197px;top:151px;font-size:11px;color:#d6d6d6;letter-spacing:-0.177px;">Show</div>
<div class="t" style="left:237px;top:151px;font-size:11px;color:#d6d6d6;letter-spacing:-0.013px;">Renderer</div>
<div class="t" style="left:297px;top:151px;font-size:11px;color:#d6d6d6;letter-spacing:0.032px;">Panels</div>
<svg class="a" style="left:0;top:167px;will-change:transform" width="1045" height="21" viewBox="0 167 1045 21"><path d="M51.0 168.0L51.0 173.5" fill="none" stroke="#7a7a7a" stroke-width="1" /><path d="M51.0 180.5L51.0 186.0" fill="none" stroke="#7a7a7a" stroke-width="1" /><path d="M50.0 168.0L50.0 173.5" fill="none" stroke="#2c2c2c" stroke-width="1" /><path d="M50.0 180.5L50.0 186.0" fill="none" stroke="#2c2c2c" stroke-width="1" /><rect x="49.0" y="173.5" width="3" height="7" fill="#555" stroke="#8a8a8a" stroke-width="0.8" /><path d="M48.5 173.5L48.5 180.5" fill="none" stroke="#2c2c2c" stroke-width="0.8" /><g transform="translate(59 169)"><circle cx="4.2" cy="4.8" r="3.8" fill="#d8d8d8" stroke="#555" stroke-width="0.8" /><circle cx="4.2" cy="4.8" r="1.6" fill="#777" stroke="#f0f0f0" stroke-width="0.6" /><circle cx="10.8" cy="4.2" r="3.6" fill="#d8d8d8" stroke="#555" stroke-width="0.8" /><circle cx="10.8" cy="4.2" r="1.5" fill="#777" stroke="#f0f0f0" stroke-width="0.6" /><path d="M3.5 10.5 L11 7.8 L12.5 11.2 L5 14 Z" fill="#1c1c1c" stroke="#000" stroke-width=".5"/><path d="M12 9 L15.5 7.5 L15.5 11 L12.8 10.8Z" fill="#1c1c1c"/><path d="M5.5 11.3 L10.5 9.5" stroke="#aaa" stroke-width=".8"/></g><g transform="translate(78 168.5)"><circle cx="4.2" cy="4.8" r="3.8" fill="#d8d8d8" stroke="#555" stroke-width="0.8" /><circle cx="4.2" cy="4.8" r="1.6" fill="#777" stroke="#f0f0f0" stroke-width="0.6" /><circle cx="10.8" cy="4.2" r="3.6" fill="#d8d8d8" stroke="#555" stroke-width="0.8" /><circle cx="10.8" cy="4.2" r="1.5" fill="#777" stroke="#f0f0f0" stroke-width="0.6" /><path d="M3.5 10.5 L11 7.8 L12.5 11.2 L5 14 Z" fill="#1c1c1c" stroke="#000" stroke-width=".5"/><path d="M12 9 L15.5 7.5 L15.5 11 L12.8 10.8Z" fill="#1c1c1c"/><path d="M5.5 11.3 L10.5 9.5" stroke="#aaa" stroke-width=".8"/></g><rect x="86.5" y="173.5" width="8" height="10.5" fill="#f4f4f4" stroke="#444" stroke-width="0.6" /><path d="M88.0 175.5L93.0 175.5" fill="none" stroke="#333" stroke-width="0.8" /><path d="M88.0 177.5L93.0 177.5" fill="none" stroke="#333" stroke-width="0.8" /><path d="M88.0 179.5L93.0 179.5" fill="none" stroke="#333" stroke-width="0.8" /><path d="M88.0 181.5L93.0 181.5" fill="none" stroke="#333" stroke-width="0.8" /><rect x="100" y="170.5" width="14.5" height="12.5" fill="#f0f0f0" stroke="#888" stroke-width="0.6" /><rect x="101.5" y="172" width="3" height="9.5" fill="#c8c8c8" /><path d="M106.5 170.5L111.5 170.5L111.5 181.5L109.0 179.0L106.5 181.5Z" fill="#2e9a48" stroke="#145a25" stroke-width="0.5" stroke-linejoin="round" /><path d="M119.5 179.0L131.0 173.5L135.5 178.0L124.0 184.0Z" fill="#d8d8d8" stroke="#666" stroke-width="0.6" stroke-linejoin="round" /><path d="M123.5 176.5L131.5 170.2L133.5 177.5L125.5 181.5Z" fill="#3a8a3a" stroke="#eee" stroke-width="0.8" stroke-linejoin="round" /><path d="M125.0 176.5L131.0 171.5L132.3 175.3Z" fill="#4a7ad0" /><circle cx="128.5" cy="177.8" r="1.5" fill="#e8d040" /><path d="M146.5 169.0L146.5 179.5" fill="none" stroke="#e03030" stroke-width="1.3" /><path d="M141.0 174.2L152.0 174.2" fill="none" stroke="#e03030" stroke-width="1.3" /><path d="M146.5 168.0L144.8 170.3L148.2 170.3Z" fill="#e03030" /><path d="M146.5 180.5L144.8 178.2L148.2 178.2Z" fill="#e03030" /><path d="M140.0 174.2L142.3 172.5L142.3 175.9Z" fill="#e03030" /><path d="M153.0 174.2L150.7 172.5L150.7 175.9Z" fill="#e03030" /><path d="M148.5 179.5L143.5 185.0" fill="none" stroke="#b87838" stroke-width="2.2" stroke-linecap="round"/><circle cx="151" cy="175.5" r="3.6" fill="#f4f4f4" stroke="#888" stroke-width="0.8" /><path d="M149.0 175.5L153.0 175.5" fill="none" stroke="#d02020" stroke-width="1" /><path d="M151.0 173.5L151.0 177.5" fill="none" stroke="#d02020" stroke-width="1" /><path d="M161.5 168.0L161.5 173.5" fill="none" stroke="#7a7a7a" stroke-width="1" /><path d="M161.5 180.5L161.5 186.0" fill="none" stroke="#7a7a7a" stroke-width="1" /><path d="M160.5 168.0L160.5 173.5" fill="none" stroke="#2c2c2c" stroke-width="1" /><path d="M160.5 180.5L160.5 186.0" fill="none" stroke="#2c2c2c" stroke-width="1" /><rect x="159.5" y="173.5" width="3" height="7" fill="#555" stroke="#8a8a8a" stroke-width="0.8" /><path d="M159.0 173.5L159.0 180.5" fill="none" stroke="#2c2c2c" stroke-width="0.8" /><rect x="169.5" y="168.5" width="17.5" height="17" fill="#383838" stroke="#262626" stroke-width="1" rx="3" /><path d="M171.5 176.7L178.3 172.5L185.0 176.7L178.3 181.0Z" fill="#7a8ea4" stroke="#c8d4e0" stroke-width="0.8" stroke-linejoin="round" /><path d="M174.9 174.6L181.6 178.8" fill="none" stroke="#c8d4e0" stroke-width="0.7" /><path d="M181.6 174.6L174.9 178.8" fill="none" stroke="#c8d4e0" stroke-width="0.7" /><path d="M171.5 178.7L178.3 183.0L185.0 178.7Z" fill="none" stroke="#8a9aae" stroke-width="0.8" stroke-linejoin="round" /><rect x="191" y="171.5" width="14.3" height="11.5" fill="#f4f4f4" stroke="#999" stroke-width="0.5" /><rect x="192" y="173" width="12.3" height="8.5" fill="#111" /><rect x="194" y="175" width="8.3" height="4.5" fill="#8ab8e8" /><rect x="192.5" y="173.5" width="1.2" height="1" fill="#f4f4f4" /><rect x="192.5" y="180" width="1.2" height="1" fill="#f4f4f4" /><rect x="195.1" y="173.5" width="1.2" height="1" fill="#f4f4f4" /><rect x="195.1" y="180" width="1.2" height="1" fill="#f4f4f4" /><rect x="197.7" y="173.5" width="1.2" height="1" fill="#f4f4f4" /><rect x="197.7" y="180" width="1.2" height="1" fill="#f4f4f4" /><rect x="200.29999999999998" y="173.5" width="1.2" height="1" fill="#f4f4f4" /><rect x="200.29999999999998" y="180" width="1.2" height="1" fill="#f4f4f4" /><rect x="202.89999999999998" y="173.5" width="1.2" height="1" fill="#f4f4f4" /><rect x="202.89999999999998" y="180" width="1.2" height="1" fill="#f4f4f4" /><rect x="210.5" y="171.5" width="14.8" height="11.5" fill="#f4f4f4" stroke="#999" stroke-width="0.5" /><circle cx="217.9" cy="177.2" r="4.8" fill="url(#bsph)" /><rect x="229.8" y="168.5" width="17.2" height="17" fill="#7c7c7c" stroke="#2e2e2e" stroke-width="1" rx="3" /><circle cx="238.4" cy="177" r="5" fill="#9a9a9a" stroke="#d8d8d8" stroke-width="1.1" /><rect x="250.8" y="171.5" width="14.5" height="11.5" fill="#e4e4e4" stroke="#999" stroke-width="0.5" /><path d="M250.8 171.5L265.3 183.0" fill="none" stroke="#444" stroke-width="0.8" /><path d="M265.3 171.5L250.8 183.0" fill="none" stroke="#444" stroke-width="0.8" /><rect x="254.5" y="174.3" width="7.2" height="6" fill="none" stroke="#555" stroke-width="0.7" /><path d="M258.0 171.5L258.0 183.0" fill="none" stroke="#777" stroke-width="0.6" /><path d="M250.8 177.2L265.3 177.2" fill="none" stroke="#777" stroke-width="0.6" /><rect x="271.5" y="171.5" width="14" height="11.5" fill="#f4f4f4" stroke="#38a838" stroke-width="1.3" /><circle cx="275.5" cy="175.5" r="1.7" fill="#3a7ac8" /><circle cx="281.5" cy="175" r="1.7" fill="#3a7ac8" /><circle cx="278.5" cy="179.5" r="1.7" fill="#3a7ac8" /><rect x="290.5" y="171.5" width="14.3" height="11.5" fill="#f4f4f4" stroke="#38a838" stroke-width="1.3" /><text x="297.7" y="181.6" font-size="11" font-weight="bold" text-anchor="middle" fill="#111" font-family="Liberation Serif,DejaVu Serif,serif">T</text><path d="M312.8 168.0L312.8 173.5" fill="none" stroke="#7a7a7a" stroke-width="1" /><path d="M312.8 180.5L312.8 186.0" fill="none" stroke="#7a7a7a" stroke-width="1" /><path d="M311.8 168.0L311.8 173.5" fill="none" stroke="#2c2c2c" stroke-width="1" /><path d="M311.8 180.5L311.8 186.0" fill="none" stroke="#2c2c2c" stroke-width="1" /><rect x="310.8" y="173.5" width="3" height="7" fill="#555" stroke="#8a8a8a" stroke-width="0.8" /><path d="M310.3 173.5L310.3 180.5" fill="none" stroke="#2c2c2c" stroke-width="0.8" /><rect x="320.5" y="168.5" width="17.5" height="17" fill="#5c5c5c" stroke="#2e2e2e" stroke-width="1" rx="3" /><path d="M323.0 173.9L331.2 172.4L335.5 174.3L335.5 181.6L327.8 183.5L323.0 181.1Z" fill="none" stroke="#e0e0e0" stroke-width="0.9" stroke-linejoin="round" /><path d="M323.0 173.9L327.8 175.8L335.5 174.3" fill="none" stroke="#e0e0e0" stroke-width="0.9" /><path d="M327.8 175.8L327.8 183.5" fill="none" stroke="#e0e0e0" stroke-width="0.9" /><path d="M331.2 172.4L331.2 179.6L335.5 181.6" fill="none" stroke="#e0e0e0" stroke-width="0.54" opacity=".55"/><path d="M331.2 179.6L323.0 181.1" fill="none" stroke="#e0e0e0" stroke-width="0.54" opacity=".55"/><path d="M343.0 173.0L350.9 171.5L355.8 173.4L347.9 175.4Z" fill="#a8d0f4" /><path d="M343.0 173.0L347.9 175.4L347.9 183.3L343.0 180.6Z" fill="#5a9ae0" /><path d="M347.9 175.4L355.8 173.4L355.8 181.3L347.9 183.3Z" fill="#2f6cb8" /><path d="M362.7 173.0L370.7 171.5L375.7 173.5L367.7 175.5Z" fill="#a8d0f4" stroke="#f0f0f0" stroke-width="0.9" stroke-linejoin="round" /><path d="M362.7 173.0L367.7 175.5L367.7 183.5L362.7 180.8Z" fill="#5a9ae0" stroke="#f0f0f0" stroke-width="0.9" stroke-linejoin="round" /><path d="M367.7 175.5L375.7 173.5L375.7 181.5L367.7 183.5Z" fill="#2f6cb8" stroke="#f0f0f0" stroke-width="0.9" stroke-linejoin="round" /><clipPath id="ckc"><circle cx="388.7" cy="176.8" r="7"/></clipPath><g clip-path="url(#ckc)"><rect x="381" y="169" width="16" height="16" fill="#f4f4f4"/><rect x="381.7" y="169.8" width="3.5" height="3.5" fill="#111" /><rect x="381.7" y="176.8" width="3.5" height="3.5" fill="#111" /><rect x="385.2" y="173.3" width="3.5" height="3.5" fill="#111" /><rect x="385.2" y="180.3" width="3.5" height="3.5" fill="#111" /><rect x="388.7" y="169.8" width="3.5" height="3.5" fill="#111" /><rect x="388.7" y="176.8" width="3.5" height="3.5" fill="#111" /><rect x="392.2" y="173.3" width="3.5" height="3.5" fill="#111" /><rect x="392.2" y="180.3" width="3.5" height="3.5" fill="#111" /></g><circle cx="388.7" cy="176.8" r="7" fill="none" stroke="#222" stroke-width="0.6" /><circle cx="408.7" cy="176.8" r="8" fill="url(#ysph)" /><ellipse cx="428.8" cy="183" rx="5.5" ry="1.3" fill="#888" opacity=".5"/><circle cx="428.8" cy="175.8" r="6.3" fill="url(#gsph)" /><rect x="440.8" y="168.5" width="17.5" height="17" fill="#5c5c5c" stroke="#2e2e2e" stroke-width="1" rx="3" /><circle cx="449.5" cy="177" r="7" fill="url(#ksph2)" /><path d="M464.3 168.0L464.3 173.5" fill="none" stroke="#7a7a7a" stroke-width="1" /><path d="M464.3 180.5L464.3 186.0" fill="none" stroke="#7a7a7a" stroke-width="1" /><path d="M463.3 168.0L463.3 173.5" fill="none" stroke="#2c2c2c" stroke-width="1" /><path d="M463.3 180.5L463.3 186.0" fill="none" stroke="#2c2c2c" stroke-width="1" /><rect x="462.3" y="173.5" width="3" height="7" fill="#555" stroke="#8a8a8a" stroke-width="0.8" /><path d="M461.8 173.5L461.8 180.5" fill="none" stroke="#2c2c2c" stroke-width="0.8" /><rect x="474" y="170" width="12.8" height="10.2" fill="none" stroke="#30d030" stroke-width="1.2" stroke-dasharray="2 1.2"/><path d="M480.5 175.3L480.5 184.1L482.7 182.2L484.5 185.7L486.3 184.9L484.5 181.5L487.4 181.5Z" fill="#b01820" stroke="#fff" stroke-width="1.0" stroke-linejoin="round" /><path d="M495.3 168.0L495.3 173.5" fill="none" stroke="#7a7a7a" stroke-width="1" /><path d="M495.3 180.5L495.3 186.0" fill="none" stroke="#7a7a7a" stroke-width="1" /><path d="M494.3 168.0L494.3 173.5" fill="none" stroke="#2c2c2c" stroke-width="1" /><path d="M494.3 180.5L494.3 186.0" fill="none" stroke="#2c2c2c" stroke-width="1" /><rect x="493.3" y="173.5" width="3" height="7" fill="#555" stroke="#8a8a8a" stroke-width="0.8" /><path d="M492.8 173.5L492.8 180.5" fill="none" stroke="#2c2c2c" stroke-width="0.8" /><rect x="502.8" y="168.5" width="15.4" height="17" fill="#2a2a2a" stroke="#222" stroke-width="0.8" rx="3" /><path d="M504.3 174.1L512.3 172.7L516.6 174.6L516.6 181.7L509.0 183.6L504.3 181.2Z" fill="none" stroke="#d8d8d8" stroke-width="0.9" stroke-linejoin="round" /><path d="M504.3 174.1L509.0 176.0L516.6 174.6" fill="none" stroke="#d8d8d8" stroke-width="0.9" /><path d="M509.0 176.0L509.0 183.6" fill="none" stroke="#d8d8d8" stroke-width="0.9" /><path d="M512.3 172.7L512.3 179.8L516.6 181.7" fill="none" stroke="#d8d8d8" stroke-width="0.54" opacity=".55"/><path d="M512.3 179.8L504.3 181.2" fill="none" stroke="#d8d8d8" stroke-width="0.54" opacity=".55"/><rect x="523.5" y="168.5" width="15.2" height="17" fill="#2a2a2a" stroke="#222" stroke-width="0.8" rx="3" /><rect x="525.7" y="174.5" width="7.5" height="7.5" fill="none" stroke="#e0e0e0" stroke-width="1.1" /><rect x="529.3" y="171" width="7.5" height="7.5" fill="none" stroke="#e0e0e0" stroke-width="1.1" /><rect x="543.5" y="168.5" width="15.4" height="17" fill="#2a2a2a" stroke="#222" stroke-width="0.8" rx="3" /><path d="M554.5 172.0L547.5 177.0L554.5 182.0" fill="none" stroke="#e8e8e8" stroke-width="1.2" /><circle cx="554.5" cy="172" r="2.1" fill="#e8e8e8" /><circle cx="547.5" cy="177" r="2.1" fill="#e8e8e8" /><circle cx="554.5" cy="182" r="2.1" fill="#e8e8e8" /></svg>
<svg class="a" style="left:47px;top:188px;overflow:hidden;will-change:transform" width="996" height="706" viewBox="0 0 996 706"><defs><linearGradient id="vg" x1="0" y1="0" x2="0" y2="1"><stop offset="0" stop-color="#7d90a7"/><stop offset="1" stop-color="#15161a"/></linearGradient><linearGradient id="glg" gradientUnits="userSpaceOnUse" x1="0" y1="60" x2="0" y2="700"><stop offset="0" stop-color="#a0978a" stop-opacity=".4"/><stop offset=".3" stop-color="#a39c90" stop-opacity=".62"/><stop offset=".6" stop-color="#a8a6a0" stop-opacity=".85"/><stop offset="1" stop-color="#a9abae" stop-opacity="1"/></linearGradient></defs><rect x="0" y="0" width="996" height="706" fill="url(#vg)"/><path d="M455.9 63.0L3025.3 319.3M455.9 63.0L-2963.7 454.1M423.1 66.8L3213.1 362.9M489.7 66.4L-3304.3 529.2M388.0 70.8L3451.2 418.1M525.5 69.9L-3764.0 630.6M350.4 75.1L3763.1 490.5M563.6 73.7L-4419.0 775.1M310.0 79.7L4189.4 589.3M604.2 77.8L-5426.8 997.5M266.4 84.7L4806.8 732.6M647.5 82.1L-7178.0 1383.8M219.4 90.1L5781.4 958.7M693.9 86.7L-10975.4 2221.5M168.4 95.9L7548.9 1368.7M743.6 91.7L-25444.0 5413.3M113.0 102.2L11741.5 2341.4M797.1 97.0L-29548.4 7031.8M52.5 109.1L31936.7 7058.9M854.7 102.8L-25696.9 7033.5M-13.8 116.7L27622.7 7057.0M917.1 109.0L-21845.3 7035.2M-86.7 125.1L23308.6 7055.1M984.7 115.7L-17993.7 7036.9M-257.1 144.5L14680.5 7051.3M1138.7 131.1L-10290.6 7040.3M-357.5 156.0L10366.5 7049.4M1226.9 139.9L-6439.0 7042.0M-470.4 168.9L6052.4 7047.5M1324.2 149.6L-2587.4 7043.7M-598.6 183.6L1738.4 7045.6M1431.8 160.3L1264.2 7045.4M-745.2 200.4L-2575.7 7043.7M1551.8 172.3L5115.7 7047.1M-914.5 219.7L-6889.7 7041.8M1686.2 185.7L8967.3 7048.8M-1112.4 242.4L-11203.8 7039.9M1837.8 200.8L12818.9 7050.5M-1346.6 269.1L-15517.8 7038.0M2010.2 218.0L16670.5 7052.2M-1628.2 301.3L-19831.9 7036.1M2208.0 237.8L20522.0 7053.9M-1973.1 340.8L-24145.9 7034.2M2437.1 260.6L24373.6 7055.6M-2405.6 390.3L-28460.0 7032.3M2705.8 287.4L28225.2 7057.3M-2963.7 454.1L-32774.0 7030.3M3025.3 319.3L32076.8 7059.0" stroke="url(#glg)" stroke-width="1" fill="none" shape-rendering="crispEdges"/><path d="M-167.4 134.3L18994.6 7053.2M1058.3 123.1L-14142.1 7038.6" stroke="#000" stroke-width="1.9" fill="none" shape-rendering="crispEdges"/><text x="476.5" y="697" font-size="12" font-weight="bold" fill="#0b6a2c" font-family="Liberation Sans,sans-serif">persp</text><defs><radialGradient id="vcs" cx=".5" cy=".5" r=".5"><stop offset="0" stop-color="#3a4656" stop-opacity=".55"/><stop offset="1" stop-color="#3a4656" stop-opacity="0"/></radialGradient></defs><ellipse cx="943" cy="82" rx="40" ry="16" fill="url(#vcs)"/><polygon points="910.0,31.5 942.1,22.5 976.2,30.5 945.1,41.6" fill="#a9b5c5"/><polygon points="910.0,31.5 945.1,41.6 945.1,88.7 913.0,72.6" fill="#9ba7b9"/><polygon points="945.1,41.6 976.2,30.5 973.7,71.1 945.1,88.7" fill="#919db1"/><polyline points="910.0,31.5 945.1,41.6 976.2,30.5" fill="none" stroke="#7b8797" stroke-width=".8" stroke-dasharray="2 1.5"/><polyline points="945.1,41.6 945.1,88.7" fill="none" stroke="#7b8797" stroke-width=".8" stroke-dasharray="3 1.5"/><text transform="matrix(1 .373 0 1 915.5 59.30000000000001)" font-size="12" textLength="24.5" lengthAdjust="spacingAndGlyphs" font-family="DejaVu Sans Condensed,Liberation Sans,sans-serif" font-weight="bold" fill="#6e7a88">FRONT</text><text transform="matrix(1 -.59 0 1 952.3 67.30000000000001)" font-size="12" textLength="18.5" lengthAdjust="spacingAndGlyphs" font-family="DejaVu Sans Condensed,Liberation Sans,sans-serif" font-weight="bold" fill="#6e7a88">RIGHT</text><text transform="matrix(1 .2 -1.2 .45 939 31.5)" font-size="8" textLength="11" lengthAdjust="spacingAndGlyphs" font-family="DejaVu Sans Condensed,Liberation Sans,sans-serif" font-weight="bold" fill="#6e7a88">TOP</text><path d="M25.400000000000006 681.5V669" stroke="#00ff00" stroke-width="1.2"/><path d="M25.400000000000006 681.5L16.200000000000003 685.6" stroke="#0000ff" stroke-width="1.2"/><path d="M25.400000000000006 681.5L35.7 685.6" stroke="#ff0000" stroke-width="1.2"/><text x="21.799999999999997" y="662.8" fill="#00ff00" textLength="7.3" font-family="DejaVu Sans,Liberation Sans,sans-serif" font-weight="bold" font-size="14" lengthAdjust="spacingAndGlyphs">y</text><text x="11.899999999999999" y="682" fill="#0000ff" textLength="6.4" font-family="DejaVu Sans,Liberation Sans,sans-serif" font-weight="bold" font-size="14" lengthAdjust="spacingAndGlyphs">z</text><text x="33.900000000000006" y="682" fill="#ff0000" textLength="6.6" font-family="DejaVu Sans,Liberation Sans,sans-serif" font-weight="bold" font-size="14" lengthAdjust="spacingAndGlyphs">x</text></svg>
<div class="t" style="left:1083px;top:149px;font-size:11px;color:#d6d6d6;letter-spacing:-0.761px;">Channel Box / Layer Editor</div>
<svg class="a" style="left:1053px;top:152.5px;" width="18" height="6" viewBox="0 0 18 6"><rect x="0" y="1" width="1.5" height="1.5" fill="#2e2e2e"/><rect x="1" y="0" width="1.6" height="1.6" fill="#747474"/><rect x="3" y="4" width="1.5" height="1.5" fill="#2e2e2e"/><rect x="4" y="3" width="1.6" height="1.6" fill="#747474"/><rect x="6" y="1" width="1.5" height="1.5" fill="#2e2e2e"/><rect x="7" y="0" width="1.6" height="1.6" fill="#747474"/><rect x="9" y="4" width="1.5" height="1.5" fill="#2e2e2e"/><rect x="10" y="3" width="1.6" height="1.6" fill="#747474"/><rect x="12" y="1" width="1.5" height="1.5" fill="#2e2e2e"/><rect x="13" y="0" width="1.6" height="1.6" fill="#747474"/><rect x="15" y="4" width="1.5" height="1.5" fill="#2e2e2e"/><rect x="16" y="3" width="1.6" height="1.6" fill="#747474"/></svg>
<svg class="a" style="left:1209px;top:152.5px;" width="18" height="6" viewBox="0 0 18 6"><rect x="0" y="1" width="1.5" height="1.5" fill="#2e2e2e"/><rect x="1" y="0" width="1.6" height="1.6" fill="#747474"/><rect x="3" y="4" width="1.5" height="1.5" fill="#2e2e2e"/><rect x="4" y="3" width="1.6" height="1.6" fill="#747474"/><rect x="6" y="1" width="1.5" height="1.5" fill="#2e2e2e"/><rect x="7" y="0" width="1.6" height="1.6" fill="#747474"/><rect x="9" y="4" width="1.5" height="1.5" fill="#2e2e2e"/><rect x="10" y="3" width="1.6" height="1.6" fill="#747474"/><rect x="12" y="1" width="1.5" height="1.5" fill="#2e2e2e"/><rect x="13" y="0" width="1.6" height="1.6" fill="#747474"/><rect x="15" y="4" width="1.5" height="1.5" fill="#2e2e2e"/><rect x="16" y="3" width="1.6" height="1.6" fill="#747474"/></svg>
<div class="t" style="left:1060px;top:191px;font-size:11px;color:#d6d6d6;letter-spacing:-0.224px;">Channels</div>
<div class="t" style="left:1119px;top:191px;font-size:11px;color:#d6d6d6;letter-spacing:-0.291px;">Edit</div>
<div class="t" style="left:1152px;top:191px;font-size:11px;color:#d6d6d6;letter-spacing:-0.039px;">Object</div>
<div class="t" style="left:1199px;top:191px;font-size:11px;color:#d6d6d6;letter-spacing:-0.177px;">Show</div>
<div class="a" style="left:1053px;top:208px;width:204px;height:338px;background:#2b2b2b;border:1px solid #2a2a2a;box-shadow:inset 0 0 0 1px #686868;"></div>
<svg class="a" style="left:1047px;top:397px;" width="4" height="250" viewBox="0 0 4 250"><rect x="0" y="1" width="1.5" height="1.5" fill="#2e2e2e"/><rect x="1" y="0" width="1.7" height="1.7" fill="#7a7a7a"/><rect x="0" y="6" width="1.5" height="1.5" fill="#2e2e2e"/><rect x="1" y="5" width="1.7" height="1.7" fill="#7a7a7a"/><rect x="0" y="11" width="1.5" height="1.5" fill="#2e2e2e"/><rect x="1" y="10" width="1.7" height="1.7" fill="#7a7a7a"/><rect x="0" y="16" width="1.5" height="1.5" fill="#2e2e2e"/><rect x="1" y="15" width="1.7" height="1.7" fill="#7a7a7a"/><rect x="0" y="21" width="1.5" height="1.5" fill="#2e2e2e"/><rect x="1" y="20" width="1.7" height="1.7" fill="#7a7a7a"/><rect x="0" y="26" width="1.5" height="1.5" fill="#2e2e2e"/><rect x="1" y="25" width="1.7" height="1.7" fill="#7a7a7a"/><rect x="0" y="31" width="1.5" height="1.5" fill="#2e2e2e"/><rect x="1" y="30" width="1.7" height="1.7" fill="#7a7a7a"/><rect x="0" y="36" width="1.5" height="1.5" fill="#2e2e2e"/><rect x="1" y="35" width="1.7" height="1.7" fill="#7a7a7a"/><rect x="0" y="41" width="1.5" height="1.5" fill="#2e2e2e"/><rect x="1" y="40" width="1.7" height="1.7" fill="#7a7a7a"/><rect x="0" y="46" width="1.5" height="1.5" fill="#2e2e2e"/><rect x="1" y="45" width="1.7" height="1.7" fill="#7a7a7a"/><rect x="0" y="51" width="1.5" height="1.5" fill="#2e2e2e"/><rect x="1" y="50" width="1.7" height="1.7" fill="#7a7a7a"/><rect x="0" y="56" width="1.5" height="1.5" fill="#2e2e2e"/><rect x="1" y="55" width="1.7" height="1.7" fill="#7a7a7a"/><rect x="0" y="61" width="1.5" height="1.5" fill="#2e2e2e"/><rect x="1" y="60" width="1.7" height="1.7" fill="#7a7a7a"/><rect x="0" y="66" width="1.5" height="1.5" fill="#2e2e2e"/><rect x="1" y="65" width="1.7" height="1.7" fill="#7a7a7a"/><rect x="0" y="71" width="1.5" height="1.5" fill="#2e2e2e"/><rect x="1" y="70" width="1.7" height="1.7" fill="#7a7a7a"/><rect x="0" y="76" width="1.5" height="1.5" fill="#2e2e2e"/><rect x="1" y="75" width="1.7" height="1.7" fill="#7a7a7a"/><rect x="0" y="81" width="1.5" height="1.5" fill="#2e2e2e"/><rect x="1" y="80" width="1.7" height="1.7" fill="#7a7a7a"/><rect x="0" y="86" width="1.5" height="1.5" fill="#2e2e2e"/><rect x="1" y="85" width="1.7" height="1.7" fill="#7a7a7a"/><rect x="0" y="91" width="1.5" height="1.5" fill="#2e2e2e"/><rect x="1" y="90" width="1.7" height="1.7" fill="#7a7a7a"/><rect x="0" y="96" width="1.5" height="1.5" fill="#2e2e2e"/><rect x="1" y="95" width="1.7" height="1.7" fill="#7a7a7a"/><rect x="0" y="101" width="1.5" height="1.5" fill="#2e2e2e"/><rect x="1" y="100" width="1.7" height="1.7" fill="#7a7a7a"/><rect x="0" y="106" width="1.5" height="1.5" fill="#2e2e2e"/><rect x="1" y="105" width="1.7" height="1.7" fill="#7a7a7a"/><rect x="0" y="111" width="1.5" height="1.5" fill="#2e2e2e"/><rect x="1" y="110" width="1.7" height="1.7" fill="#7a7a7a"/><rect x="0" y="116" width="1.5" height="1.5" fill="#2e2e2e"/><rect x="1" y="115" width="1.7" height="1.7" fill="#7a7a7a"/><rect x="0" y="121" width="1.5" height="1.5" fill="#2e2e2e"/><rect x="1" y="120" width="1.7" height="1.7" fill="#7a7a7a"/><rect x="0" y="126" width="1.5" height="1.5" fill="#2e2e2e"/><rect x="1" y="125" width="1.7" height="1.7" fill="#7a7a7a"/><rect x="0" y="131" width="1.5" height="1.5" fill="#2e2e2e"/><rect x="1" y="130" width="1.7" height="1.7" fill="#7a7a7a"/><rect x="0" y="136" width="1.5" height="1.5" fill="#2e2e2e"/><rect x="1" y="135" width="1.7" height="1.7" fill="#7a7a7a"/><rect x="0" y="141" width="1.5" height="1.5" fill="#2e2e2e"/><rect x="1" y="140" width="1.7" height="1.7" fill="#7a7a7a"/><rect x="0" y="146" width="1.5" height="1.5" fill="#2e2e2e"/><rect x="1" y="145" width="1.7" height="1.7" fill="#7a7a7a"/><rect x="0" y="151" width="1.5" height="1.5" fill="#2e2e2e"/><rect x="1" y="150" width="1.7" height="1.7" fill="#7a7a7a"/><rect x="0" y="156" width="1.5" height="1.5" fill="#2e2e2e"/><rect x="1" y="155" width="1.7" height="1.7" fill="#7a7a7a"/><rect x="0" y="161" width="1.5" height="1.5" fill="#2e2e2e"/><rect x="1" y="160" width="1.7" height="1.7" fill="#7a7a7a"/><rect x="0" y="166" width="1.5" height="1.5" fill="#2e2e2e"/><rect x="1" y="165" width="1.7" height="1.7" fill="#7a7a7a"/><rect x="0" y="171" width="1.5" height="1.5" fill="#2e2e2e"/><rect x="1" y="170" width="1.7" height="1.7" fill="#7a7a7a"/><rect x="0" y="176" width="1.5" height="1.5" fill="#2e2e2e"/><rect x="1" y="175" width="1.7" height="1.7" fill="#7a7a7a"/><rect x="0" y="181" width="1.5" height="1.5" fill="#2e2e2e"/><rect x="1" y="180" width="1.7" height="1.7" fill="#7a7a7a"/><rect x="0" y="186" width="1.5" height="1.5" fill="#2e2e2e"/><rect x="1" y="185" width="1.7" height="1.7" fill="#7a7a7a"/><rect x="0" y="191" width="1.5" height="1.5" fill="#2e2e2e"/><rect x="1" y="190" width="1.7" height="1.7" fill="#7a7a7a"/><rect x="0" y="196" width="1.5" height="1.5" fill="#2e2e2e"/><rect x="1" y="195" width="1.7" height="1.7" fill="#7a7a7a"/><rect x="0" y="201" width="1.5" height="1.5" fill="#2e2e2e"/><rect x="1" y="200" width="1.7" height="1.7" fill="#7a7a7a"/><rect x="0" y="206" width="1.5" height="1.5" fill="#2e2e2e"/><rect x="1" y="205" width="1.7" height="1.7" fill="#7a7a7a"/><rect x="0" y="211" width="1.5" height="1.5" fill="#2e2e2e"/><rect x="1" y="210" width="1.7" height="1.7" fill="#7a7a7a"/><rect x="0" y="216" width="1.5" height="1.5" fill="#2e2e2e"/><rect x="1" y="215" width="1.7" height="1.7" fill="#7a7a7a"/><rect x="0" y="221" width="1.5" height="1.5" fill="#2e2e2e"/><rect x="1" y="220" width="1.7" height="1.7" fill="#7a7a7a"/><rect x="0" y="226" width="1.5" height="1.5" fill="#2e2e2e"/><rect x="1" y="225" width="1.7" height="1.7" fill="#7a7a7a"/><rect x="0" y="231" width="1.5" height="1.5" fill="#2e2e2e"/><rect x="1" y="230" width="1.7" height="1.7" fill="#7a7a7a"/><rect x="0" y="236" width="1.5" height="1.5" fill="#2e2e2e"/><rect x="1" y="235" width="1.7" height="1.7" fill="#7a7a7a"/><rect x="0" y="241" width="1.5" height="1.5" fill="#2e2e2e"/><rect x="1" y="240" width="1.7" height="1.7" fill="#7a7a7a"/><rect x="0" y="246" width="1.5" height="1.5" fill="#2e2e2e"/><rect x="1" y="245" width="1.7" height="1.7" fill="#7a7a7a"/></svg>
<svg class="a" style="left:1120px;top:548px;" width="64" height="6" viewBox="0 0 64 6"><rect x="0" y="1" width="1.5" height="1.5" fill="#2e2e2e"/><rect x="1" y="0" width="1.6" height="1.6" fill="#747474"/><rect x="3" y="4" width="1.5" height="1.5" fill="#2e2e2e"/><rect x="4" y="3" width="1.6" height="1.6" fill="#747474"/><rect x="6" y="1" width="1.5" height="1.5" fill="#2e2e2e"/><rect x="7" y="0" width="1.6" height="1.6" fill="#747474"/><rect x="9" y="4" width="1.5" height="1.5" fill="#2e2e2e"/><rect x="10" y="3" width="1.6" height="1.6" fill="#747474"/><rect x="12" y="1" width="1.5" height="1.5" fill="#2e2e2e"/><rect x="13" y="0" width="1.6" height="1.6" fill="#747474"/><rect x="15" y="4" width="1.5" height="1.5" fill="#2e2e2e"/><rect x="16" y="3" width="1.6" height="1.6" fill="#747474"/><rect x="18" y="1" width="1.5" height="1.5" fill="#2e2e2e"/><rect x="19" y="0" width="1.6" height="1.6" fill="#747474"/><rect x="21" y="4" width="1.5" height="1.5" fill="#2e2e2e"/><rect x="22" y="3" width="1.6" height="1.6" fill="#747474"/><rect x="24" y="1" width="1.5" height="1.5" fill="#2e2e2e"/><rect x="25" y="0" width="1.6" height="1.6" fill="#747474"/><rect x="27" y="4" width="1.5" height="1.5" fill="#2e2e2e"/><rect x="28" y="3" width="1.6" height="1.6" fill="#747474"/><rect x="30" y="1" width="1.5" height="1.5" fill="#2e2e2e"/><rect x="31" y="0" width="1.6" height="1.6" fill="#747474"/><rect x="33" y="4" width="1.5" height="1.5" fill="#2e2e2e"/><rect x="34" y="3" width="1.6" height="1.6" fill="#747474"/><rect x="36" y="1" width="1.5" height="1.5" fill="#2e2e2e"/><rect x="37" y="0" width="1.6" height="1.6" fill="#747474"/><rect x="39" y="4" width="1.5" height="1.5" fill="#2e2e2e"/><rect x="40" y="3" width="1.6" height="1.6" fill="#747474"/><rect x="42" y="1" width="1.5" height="1.5" fill="#2e2e2e"/><rect x="43" y="0" width="1.6" height="1.6" fill="#747474"/><rect x="45" y="4" width="1.5" height="1.5" fill="#2e2e2e"/><rect x="46" y="3" width="1.6" height="1.6" fill="#747474"/><rect x="48" y="1" width="1.5" height="1.5" fill="#2e2e2e"/><rect x="49" y="0" width="1.6" height="1.6" fill="#747474"/><rect x="51" y="4" width="1.5" height="1.5" fill="#2e2e2e"/><rect x="52" y="3" width="1.6" height="1.6" fill="#747474"/><rect x="54" y="1" width="1.5" height="1.5" fill="#2e2e2e"/><rect x="55" y="0" width="1.6" height="1.6" fill="#747474"/><rect x="57" y="4" width="1.5" height="1.5" fill="#2e2e2e"/><rect x="58" y="3" width="1.6" height="1.6" fill="#747474"/><rect x="60" y="1" width="1.5" height="1.5" fill="#2e2e2e"/><rect x="61" y="0" width="1.6" height="1.6" fill="#747474"/></svg>
<div class="a" style="left:1054px;top:577px;width:202px;height:317px;background:#444;border:1px solid #303030;box-shadow:inset 0 0 0 1px #4e4e4e;"></div>
<div class="a" style="left:1112px;top:561px;width:63px;height:17px;background:linear-gradient(#424242,#3b3b3b);border:1px solid #2a2a2a;border-radius:3px 3px 0 0;"></div>
<div class="a" style="left:1174px;top:561px;width:48px;height:17px;background:linear-gradient(#424242,#3b3b3b);border:1px solid #2a2a2a;border-radius:3px 3px 0 0;"></div>
<div class="a" style="left:1054px;top:557px;width:59px;height:22px;background:linear-gradient(#626262,#5b5b5b);border:1px solid #2c2c2c;border-bottom:none;border-radius:4px 4px 0 0;"></div>
<div class="t" style="left:1065px;top:562px;font-size:11px;color:#e6e6e6;letter-spacing:-0.212px;">Display</div>
<div class="t" style="left:1125px;top:563px;font-size:11px;color:#d6d6d6;letter-spacing:0.136px;">Render</div>
<div class="t" style="left:1186px;top:563px;font-size:11px;color:#d6d6d6;letter-spacing:-0.358px;">Anim</div>
<div class="t" style="left:1063px;top:583px;font-size:11px;color:#d6d6d6;letter-spacing:0.043px;">Layers</div>
<div class="t" style="left:1110px;top:583px;font-size:11px;color:#d6d6d6;letter-spacing:-0.026px;">Options</div>
<div class="t" style="left:1162px;top:583px;font-size:11px;color:#d6d6d6;letter-spacing:-0.142px;">Help</div>
<div class="a" style="left:1058px;top:626px;width:193px;height:265px;background:#2b2b2b;border:1px solid #383838;box-shadow:inset 0 0 0 1px #262626;"></div>
<div class="a" style="left:1060px;top:629px;width:189px;height:20px;background:#6b93bd;"></div>
<div class="a" style="left:1063px;top:632px;width:20px;height:15px;background:#6690bb;border:1px solid #456a92;border-radius:3px;"></div>
<div class="a" style="left:1086px;top:632px;width:20px;height:15px;background:#6690bb;border:1px solid #456a92;border-radius:3px;"></div>
<svg class="a" style="left:1108.5px;top:632px;" width="17" height="15" viewBox="0 0 17 15"><rect width="16" height="15" fill="#222"/><rect x="16" width="1" height="15" fill="#ddd"/><path d="M1 14L15.5 1" stroke="#ddd" stroke-width="1"/></svg>
<div class="t" style="left:1127.5px;top:633px;font-size:11px;color:#000;letter-spacing:-0.354px;">layer1</div>
<div class="a" style="left:1060px;top:873.5px;width:189px;height:15px;background:#333;border-radius:2px;background:repeating-conic-gradient(#2c2c2c 0 25%,#3a3a3a 0 50%) 0 0/2px 2px;"></div>
<div class="a" style="left:1060px;top:873.5px;width:16px;height:15px;background:linear-gradient(#7a7a7a,#5c5c5c);border:1px solid #333;border-radius:2px;"></div>
<svg class="a" style="left:1064px;top:878px;" width="6" height="7" viewBox="0 0 6 7"><path d="M5.5 0.3V6.7L0.5 3.5z" fill="#e0e0e0"/></svg>
<div class="a" style="left:1218px;top:873.5px;width:15px;height:15px;background:linear-gradient(#7a7a7a,#5c5c5c);border:1px solid #333;border-radius:2px;"></div>
<svg class="a" style="left:1222px;top:878px;" width="6" height="7" viewBox="0 0 6 7"><path d="M5.5 0.3V6.7L0.5 3.5z" fill="#e0e0e0"/></svg>
<div class="a" style="left:1233px;top:873.5px;width:15px;height:15px;background:linear-gradient(#7a7a7a,#5c5c5c);border:1px solid #333;border-radius:2px;"></div>
<svg class="a" style="left:1238px;top:878px;" width="6" height="7" viewBox="0 0 6 7"><path d="M0.5 0.3V6.7L5.5 3.5z" fill="#e0e0e0"/></svg>
<div class="a" style="left:1076px;top:873.5px;width:75px;height:15px;background:linear-gradient(#787878,#5a5a5a);border:1px solid #333;border-radius:2px;"></div>
<svg class="a" style="left:1104px;top:876.5px;" width="22" height="11" viewBox="0 0 22 11"><rect x="0.0" y="0" width="1.8" height="1.6" fill="#2e2e2e"/><rect x="4.3" y="0" width="1.8" height="1.6" fill="#2e2e2e"/><rect x="8.6" y="0" width="1.8" height="1.6" fill="#2e2e2e"/><rect x="12.899999999999999" y="0" width="1.8" height="1.6" fill="#2e2e2e"/><rect x="17.2" y="0" width="1.8" height="1.6" fill="#2e2e2e"/><rect x="0.0" y="4" width="1.8" height="1.6" fill="#2e2e2e"/><rect x="4.3" y="4" width="1.8" height="1.6" fill="#2e2e2e"/><rect x="8.6" y="4" width="1.8" height="1.6" fill="#2e2e2e"/><rect x="12.899999999999999" y="4" width="1.8" height="1.6" fill="#2e2e2e"/><rect x="17.2" y="4" width="1.8" height="1.6" fill="#2e2e2e"/><rect x="0.0" y="8" width="1.8" height="1.6" fill="#2e2e2e"/><rect x="4.3" y="8" width="1.8" height="1.6" fill="#2e2e2e"/><rect x="8.6" y="8" width="1.8" height="1.6" fill="#2e2e2e"/><rect x="12.899999999999999" y="8" width="1.8" height="1.6" fill="#2e2e2e"/><rect x="17.2" y="8" width="1.8" height="1.6" fill="#2e2e2e"/></svg>
<svg class="a" style="left:1050px;top:146px" width="230" height="50" viewBox="1050 146 230 50"><rect x="1229.5" y="149" width="11.5" height="11.5" fill="#444" stroke="#2a2a2a" stroke-width="1" rx="2.5" /><rect x="1234.5" y="151.5" width="4.5" height="4" fill="none" stroke="#000" stroke-width="1.2" /><rect x="1232" y="154" width="4.5" height="4" fill="#444" stroke="#000" stroke-width="1.2" /><rect x="1244.5" y="149" width="11.5" height="11.5" fill="#444" stroke="#2a2a2a" stroke-width="1" rx="2.5" /><path d="M1247.3 151.8L1253.3 157.8" fill="none" stroke="#000" stroke-width="1.6" /><path d="M1253.3 151.8L1247.3 157.8" fill="none" stroke="#000" stroke-width="1.6" /><path d="M1205.2 177.3L1205.2 172.0" fill="none" stroke="#b0b0b0" stroke-width="1.3" /><path d="M1205.2 177.3L1201.0 177.0" fill="none" stroke="#b0b0b0" stroke-width="1.3" /><path d="M1205.2 177.3L1208.0 180.0" fill="none" stroke="#b0b0b0" stroke-width="1.3" /><path d="M1205.3 167.8L1202.8 174.0L1207.8 174.0Z" fill="#28c838" stroke="#0a7a18" stroke-width="0.4" stroke-linejoin="round" /><path d="M1195.6 176.3L1202.0 173.8L1202.0 179.3Z" fill="#2038d0" stroke="#101a80" stroke-width="0.4" stroke-linejoin="round" /><path d="M1212.0 183.0L1205.8 181.0L1209.3 177.3Z" fill="#e02830" stroke="#800a10" stroke-width="0.4" stroke-linejoin="round" /><path d="M1224.9 174.9 V168.1 A6.8 6.8 0 0 0 1219.3 178.8 Z" fill="#8a8a8a"/><circle cx="1224.9" cy="174.9" r="6.8" fill="none" stroke="#9a9a9a" stroke-width="1.4" /><path d="M1224.9 168.5L1224.9 174.9L1220.0 178.3" fill="none" stroke="#9a9a9a" stroke-width="1.2" /><path d="M1239.2 182.0L1249.5 172.0" fill="none" stroke="#9a9a9a" stroke-width="1.7" /><path d="M1252.8 168.8L1245.8 171.0L1250.6 175.8Z" fill="#9a9a9a" /></svg>
<svg class="a" style="left:1050px;top:600px" width="230" height="24" viewBox="1050 600 230 24"><path d="M1160.8 617.1L1166.4 614.9L1172.6 617.9L1167.7 620.4Z" fill="#2c2c2c" /><path d="M1160.8 615.8L1166.4 613.6L1172.6 616.6L1167.7 619.1Z" fill="#f4f4f4" stroke="#3a3a3a" stroke-width="0.4" stroke-linejoin="round" /><path d="M1160.8 613.4L1166.4 611.2L1172.6 614.2L1167.7 616.7Z" fill="#2c2c2c" /><path d="M1160.8 612.1L1166.4 609.9L1172.6 612.9L1167.7 615.4Z" fill="#f4f4f4" stroke="#3a3a3a" stroke-width="0.4" stroke-linejoin="round" /><path d="M1160.8 609.7L1166.4 607.5L1172.6 610.5L1167.7 613.0Z" fill="#2c2c2c" /><path d="M1160.8 608.4L1166.4 606.2L1172.6 609.2L1167.7 611.7Z" fill="#8e8e8e" stroke="#3a3a3a" stroke-width="0.4" stroke-linejoin="round" /><path d="M1156.6 621.2L1156.6 610.7" fill="none" stroke="#d02530" stroke-width="1.6" /><path d="M1159.6 610.7L1156.6 605.2L1153.6 610.7Z" fill="#d02530" /><path d="M1185.2 617.3L1190.8 615.1L1197.0 618.1L1192.1 620.6Z" fill="#2c2c2c" /><path d="M1185.2 616.0L1190.8 613.8L1197.0 616.8L1192.1 619.3Z" fill="#8e8e8e" stroke="#3a3a3a" stroke-width="0.4" stroke-linejoin="round" /><path d="M1185.2 613.6L1190.8 611.4L1197.0 614.4L1192.1 616.9Z" fill="#2c2c2c" /><path d="M1185.2 612.3L1190.8 610.1L1197.0 613.1L1192.1 615.6Z" fill="#f0f0f0" stroke="#3a3a3a" stroke-width="0.4" stroke-linejoin="round" /><path d="M1185.2 609.9L1190.8 607.7L1197.0 610.7L1192.1 613.2Z" fill="#2c2c2c" /><path d="M1185.2 608.6L1190.8 606.4L1197.0 609.4L1192.1 611.9Z" fill="#f8f8f8" stroke="#3a3a3a" stroke-width="0.4" stroke-linejoin="round" /><path d="M1181.6 604.0L1181.6 614.3" fill="none" stroke="#d02530" stroke-width="1.6" /><path d="M1178.6 614.3L1181.6 619.8L1184.6 614.3Z" fill="#d02530" /><path d="M1206.8 616.4L1214.2 612.1L1222.7 615.1L1216.7 621.0Z" fill="#2e2e2e" /><path d="M1206.8 615.2L1214.2 610.9L1222.7 613.9L1216.7 619.9Z" fill="#ececec" stroke="#bbb" stroke-width="0.4" stroke-linejoin="round" /><circle cx="1219.3" cy="608.3" r="4.680000000000001" fill="#ff9a20" opacity=".25"/><path d="M1219.3 603.1L1220.1 606.5L1221.9 605.7L1221.1 607.5L1224.5 608.3L1221.1 609.1L1221.9 610.9L1220.1 610.1L1219.3 613.5L1218.5 610.1L1216.7 610.9L1217.5 609.1L1214.1 608.3L1217.5 607.5L1216.7 605.7L1218.5 606.5Z" fill="#ffa628" stroke="#e06a00" stroke-width="0.4" stroke-linejoin="round" /><circle cx="1219.3" cy="608.3" r="1.7" fill="#fffbe0" /><path d="M1230.5 616.4L1239.0 612.3L1246.4 615.1L1240.8 620.7Z" fill="#2e2e2e" /><path d="M1230.5 615.2L1239.0 611.1L1246.4 613.9L1240.8 619.5Z" fill="#ececec" stroke="#bbb" stroke-width="0.4" stroke-linejoin="round" /><circle cx="1236.5" cy="612.2" r="3.9" fill="url(#bsph)" /><circle cx="1243.4" cy="608.3" r="4.680000000000001" fill="#ff9a20" opacity=".25"/><path d="M1243.4 603.1L1244.2 606.5L1246.0 605.7L1245.2 607.5L1248.6 608.3L1245.2 609.1L1246.0 610.9L1244.2 610.1L1243.4 613.5L1242.6 610.1L1240.8 610.9L1241.6 609.1L1238.2 608.3L1241.6 607.5L1240.8 605.7L1242.6 606.5Z" fill="#ffa628" stroke="#e06a00" stroke-width="0.4" stroke-linejoin="round" /><circle cx="1243.4" cy="608.3" r="1.7" fill="#fffbe0" /></svg>
<div class="a" style="left:1259px;top:147px;width:18px;height:99px;background:#434343;border:1px solid #2c2c2c;border-left:1px solid #383838;border-radius:0 5px 5px 0;"></div>
<div class="a" style="left:1258px;top:245px;width:22px;height:153px;background:linear-gradient(90deg,#5a5a5a,#636363);border:1px solid #2c2c2c;border-left:none;border-radius:0 5px 5px 0;"></div>
<div class="t" style="left:1274px;top:159px;transform-origin:0 0;transform:rotate(90deg);font-size:11px;color:#d6d6d6;letter-spacing:-0.16px">Attribute Editor</div>
<div class="t" style="left:1274px;top:259px;transform-origin:0 0;transform:rotate(90deg);font-size:11px;color:#e8e8e8;letter-spacing:-0.165px">Channel Box / Layer Editor</div>
<div class="a" style="left:0px;top:897px;width:1280px;height:1px;background:#2e2e2e;"></div>
<svg class="a" style="left:6px;top:902px;" width="6" height="27" viewBox="0 0 6 27"><rect x="0" y="1" width="1.5" height="1.5" fill="#2e2e2e"/><rect x="1" y="0" width="1.6" height="1.6" fill="#747474"/><rect x="3" y="4" width="1.5" height="1.5" fill="#2e2e2e"/><rect x="4" y="3" width="1.6" height="1.6" fill="#747474"/><rect x="0" y="7" width="1.5" height="1.5" fill="#2e2e2e"/><rect x="1" y="6" width="1.6" height="1.6" fill="#747474"/><rect x="3" y="10" width="1.5" height="1.5" fill="#2e2e2e"/><rect x="4" y="9" width="1.6" height="1.6" fill="#747474"/><rect x="0" y="13" width="1.5" height="1.5" fill="#2e2e2e"/><rect x="1" y="12" width="1.6" height="1.6" fill="#747474"/><rect x="3" y="16" width="1.5" height="1.5" fill="#2e2e2e"/><rect x="4" y="15" width="1.6" height="1.6" fill="#747474"/><rect x="0" y="19" width="1.5" height="1.5" fill="#2e2e2e"/><rect x="1" y="18" width="1.6" height="1.6" fill="#747474"/><rect x="3" y="22" width="1.5" height="1.5" fill="#2e2e2e"/><rect x="4" y="21" width="1.6" height="1.6" fill="#747474"/><rect x="0" y="25" width="1.5" height="1.5" fill="#2e2e2e"/><rect x="1" y="24" width="1.6" height="1.6" fill="#747474"/></svg>
<div class="a" style="left:14px;top:901px;width:965px;height:29px;background:#707070;box-shadow:inset 1px 1px 0 #3a3a3a;"></div>
<div class="a" style="left:15px;top:902px;width:4.5px;height:27px;background:#828282;"></div>
<div class="a" style="left:19.5px;top:902px;width:39px;height:27px;background:#5a5a5a;"></div>
<div class="t" style="left:27px;top:914px;font-size:11px;color:#fff;">1</div>
<div class="a" style="left:58.0px;top:915px;width:2px;height:14px;background:#000;"></div>
<div class="t" style="left:65.5px;top:900px;font-size:11px;color:#000;">2</div>
<div class="a" style="left:137.5px;top:915px;width:2px;height:14px;background:#000;"></div>
<div class="t" style="left:145.5px;top:900px;font-size:11px;color:#000;">4</div>
<div class="a" style="left:217.5px;top:915px;width:2px;height:14px;background:#000;"></div>
<div class="t" style="left:224.5px;top:900px;font-size:11px;color:#000;">6</div>
<div class="a" style="left:297.0px;top:915px;width:2px;height:14px;background:#000;"></div>
<div class="t" style="left:304.5px;top:900px;font-size:11px;color:#000;">8</div>
<div class="a" style="left:376.5px;top:915px;width:2px;height:14px;background:#000;"></div>
<div class="t" style="left:385px;top:900px;font-size:11px;color:#000;">10</div>
<div class="a" style="left:456.0px;top:915px;width:2px;height:14px;background:#000;"></div>
<div class="t" style="left:464px;top:900px;font-size:11px;color:#000;">12</div>
<div class="a" style="left:536.0px;top:915px;width:2px;height:14px;background:#000;"></div>
<div class="t" style="left:544px;top:900px;font-size:11px;color:#000;">14</div>
<div class="a" style="left:615.5px;top:915px;width:2px;height:14px;background:#000;"></div>
<div class="t" style="left:623px;top:900px;font-size:11px;color:#000;">16</div>
<div class="a" style="left:695.0px;top:915px;width:2px;height:14px;background:#000;"></div>
<div class="t" style="left:703px;top:900px;font-size:11px;color:#000;">18</div>
<div class="a" style="left:774.5px;top:915px;width:2px;height:14px;background:#000;"></div>
<div class="t" style="left:783px;top:900px;font-size:11px;color:#000;">20</div>
<div class="a" style="left:854.5px;top:915px;width:2px;height:14px;background:#000;"></div>
<div class="t" style="left:862px;top:900px;font-size:11px;color:#000;">22</div>
<div class="a" style="left:934.0px;top:915px;width:2px;height:14px;background:#000;"></div>
<div class="t" style="left:942px;top:900px;font-size:11px;color:#000;">24</div>
<div class="a" style="left:982px;top:906.5px;width:67px;height:18px;background:#2b2b2b;border:1px solid #3a3a3a;border-radius:3px;"></div>
<div class="t" style="left:986.5px;top:909px;font-size:11px;color:#d6d6d6;">1.00</div>
<svg class="a" style="left:1050px;top:902px" width="230" height="30" viewBox="1050 902 230 30"><defs><linearGradient id="pbg" x1="0" y1="0" x2="0" y2="1"><stop offset="0" stop-color="#f4f4f4"/><stop offset="1" stop-color="#9a9a9a"/></linearGradient></defs><rect x="1059.7" y="910" width="3" height="14" fill="url(#pbg)" stroke="#262626" stroke-width="0.7" /><path d="M1070.4 911.5L1070.4 922.5L1062.9 917.0Z" fill="url(#pbg)" stroke="#262626" stroke-width="0.7" stroke-linejoin="round" /><path d="M1076.7 911.5L1076.7 922.5L1069.2 917.0Z" fill="url(#pbg)" stroke="#262626" stroke-width="0.7" stroke-linejoin="round" /><rect x="1087.8" y="910" width="3" height="14" fill="url(#pbg)" stroke="#262626" stroke-width="0.7" /><path d="M1102.5 910.0L1102.5 924.0L1091.0 917.0Z" fill="url(#pbg)" stroke="#262626" stroke-width="0.7" stroke-linejoin="round" /><rect x="1118" y="910" width="3" height="14" fill="url(#pbg)" stroke="#262626" stroke-width="0.7" /><path d="M1130.7 910.0L1130.7 924.0L1121.2 917.0Z" fill="url(#pbg)" stroke="#262626" stroke-width="0.7" stroke-linejoin="round" /><path d="M1117.5 907.0L1117.5 927.0" fill="none" stroke="#e02030" stroke-width="1.1" /><path d="M1157.5 910.0L1157.5 924.0L1145.0 917.0Z" fill="url(#pbg)" stroke="#262626" stroke-width="0.7" stroke-linejoin="round" /><path d="M1172.2 910.0L1172.2 924.0L1184.7 917.0Z" fill="url(#pbg)" stroke="#262626" stroke-width="0.7" stroke-linejoin="round" /><path d="M1199.2 910.0L1199.2 924.0L1208.7 917.0Z" fill="url(#pbg)" stroke="#262626" stroke-width="0.7" stroke-linejoin="round" /><rect x="1209.0" y="910" width="3" height="14" fill="url(#pbg)" stroke="#262626" stroke-width="0.7" /><path d="M1212.5 907.0L1212.5 927.0" fill="none" stroke="#e02030" stroke-width="1.1" /><path d="M1227.6 910.0L1227.6 924.0L1239.1 917.0Z" fill="url(#pbg)" stroke="#262626" stroke-width="0.7" stroke-linejoin="round" /><rect x="1239.3" y="910" width="3" height="14" fill="url(#pbg)" stroke="#262626" stroke-width="0.7" /><path d="M1253.8 911.5L1253.8 922.5L1261.3 917.0Z" fill="url(#pbg)" stroke="#262626" stroke-width="0.7" stroke-linejoin="round" /><path d="M1260.1 911.5L1260.1 922.5L1267.6 917.0Z" fill="url(#pbg)" stroke="#262626" stroke-width="0.7" stroke-linejoin="round" /><rect x="1267.3" y="910" width="3" height="14" fill="url(#pbg)" stroke="#262626" stroke-width="0.7" /></svg>
<div class="a" style="left:0px;top:932px;width:1280px;height:1px;background:#353535;"></div>
<svg class="a" style="left:6px;top:940px;" width="6" height="18" viewBox="0 0 6 18"><rect x="0" y="1" width="1.5" height="1.5" fill="#2e2e2e"/><rect x="1" y="0" width="1.6" height="1.6" fill="#747474"/><rect x="3" y="4" width="1.5" height="1.5" fill="#2e2e2e"/><rect x="4" y="3" width="1.6" height="1.6" fill="#747474"/><rect x="0" y="7" width="1.5" height="1.5" fill="#2e2e2e"/><rect x="1" y="6" width="1.6" height="1.6" fill="#747474"/><rect x="3" y="10" width="1.5" height="1.5" fill="#2e2e2e"/><rect x="4" y="9" width="1.6" height="1.6" fill="#747474"/><rect x="0" y="13" width="1.5" height="1.5" fill="#2e2e2e"/><rect x="1" y="12" width="1.6" height="1.6" fill="#747474"/><rect x="3" y="16" width="1.5" height="1.5" fill="#2e2e2e"/><rect x="4" y="15" width="1.6" height="1.6" fill="#747474"/></svg>
<div class="a" style="left:14px;top:938.5px;width:68px;height:18.5px;background:#2b2b2b;border:1px solid #3a3a3a;border-radius:3px;"></div>
<div class="a" style="left:86px;top:938.5px;width:68px;height:18.5px;background:#2b2b2b;border:1px solid #3a3a3a;border-radius:3px;"></div>
<div class="t" style="left:17.5px;top:942px;font-size:11px;color:#d6d6d6;">1.00</div>
<div class="t" style="left:89.5px;top:942px;font-size:11px;color:#d6d6d6;">1.00</div>
<div class="a" style="left:157px;top:938.5px;width:686.5px;height:21px;background:#262626;border-top:1px solid #1e1e1e;"></div>
<div class="a" style="left:162px;top:940.5px;width:346px;height:18px;background:#6a6a6a;"></div>
<div class="a" style="left:168px;top:944px;width:9.5px;height:11.5px;border-right:1.5px solid #2a2a2a;border-bottom:1.5px solid #2a2a2a;"></div>
<div class="a" style="left:494px;top:944px;width:9.5px;height:11.5px;border-right:1.5px solid #2a2a2a;border-bottom:1.5px solid #2a2a2a;"></div>
<div class="t" style="left:181.5px;top:943px;font-size:11px;color:#e6e6e6;">1</div>
<div class="t" style="left:476px;top:943px;font-size:11px;color:#e6e6e6;">24</div>
<div class="a" style="left:847px;top:938.5px;width:68px;height:18.5px;background:#2b2b2b;border:1px solid #3a3a3a;border-radius:3px;"></div>
<div class="a" style="left:919px;top:938.5px;width:68px;height:18.5px;background:#2b2b2b;border:1px solid #3a3a3a;border-radius:3px;"></div>
<div class="t" style="left:850.5px;top:942px;font-size:11px;color:#d6d6d6;">24.00</div>
<div class="t" style="left:923px;top:942px;font-size:11px;color:#d6d6d6;">48.00</div>
<svg class="a" style="left:992px;top:945px;" width="11" height="7" viewBox="0 0 11 7"><path d="M0.8 0.5h9.4l-4.7 5.5z" fill="#5a5a5a" stroke="#9a9a9a" stroke-width=".9"/></svg>
<div class="a" style="left:1009.5px;top:938.5px;width:100px;height:18.5px;background:#2b2b2b;border:1px solid #3a3a3a;border-radius:3px;"></div>
<div class="t" style="left:1013.5px;top:942px;font-size:11px;color:#d6d6d6;letter-spacing:-0.212px;">No Anim Layer</div>
<svg class="a" style="left:1115px;top:945px;" width="11" height="7" viewBox="0 0 11 7"><path d="M0.8 0.5h9.4l-4.7 5.5z" fill="#5a5a5a" stroke="#9a9a9a" stroke-width=".9"/></svg>
<div class="a" style="left:1132.5px;top:938.5px;width:100.5px;height:18.5px;background:#2b2b2b;border:1px solid #3a3a3a;border-radius:3px;"></div>
<div class="t" style="left:1136.5px;top:942px;font-size:11px;color:#d6d6d6;letter-spacing:-0.053px;">No Character Set</div>
<svg class="a" style="left:1237px;top:943px;" width="18" height="10" viewBox="0 0 18 10"><circle cx="4" cy="5" r="3" fill="none" stroke="#d0d0d0" stroke-width="1.3"/><path d="M7 5h10 M13.5 5v3 M16.3 5v3" stroke="#d0d0d0" stroke-width="1.3" fill="none"/></svg>
<svg class="a" style="left:1260.5px;top:940.5px;" width="14" height="14" viewBox="0 0 14 14"><rect x=".5" y=".5" width="13" height="13" fill="#f0f0f0" stroke="#b8b8b8"/><rect x=".5" y=".5" width="13" height="2.6" fill="#5aa0e0"/><path d="M2.5 6.5h9 M2.5 9.5h9 M4 12l3-7 M6 12.5l4-8 M9 12l2-4" stroke="#d02030" stroke-width="1" fill="none"/></svg>
<div class="a" style="left:0px;top:962px;width:1280px;height:1px;background:#353535;"></div>
<svg class="a" style="left:6px;top:968px;" width="6" height="21" viewBox="0 0 6 21"><rect x="0" y="1" width="1.5" height="1.5" fill="#2e2e2e"/><rect x="1" y="0" width="1.6" height="1.6" fill="#747474"/><rect x="3" y="4" width="1.5" height="1.5" fill="#2e2e2e"/><rect x="4" y="3" width="1.6" height="1.6" fill="#747474"/><rect x="0" y="7" width="1.5" height="1.5" fill="#2e2e2e"/><rect x="1" y="6" width="1.6" height="1.6" fill="#747474"/><rect x="3" y="10" width="1.5" height="1.5" fill="#2e2e2e"/><rect x="4" y="9" width="1.6" height="1.6" fill="#747474"/><rect x="0" y="13" width="1.5" height="1.5" fill="#2e2e2e"/><rect x="1" y="12" width="1.6" height="1.6" fill="#747474"/><rect x="3" y="16" width="1.5" height="1.5" fill="#2e2e2e"/><rect x="4" y="15" width="1.6" height="1.6" fill="#747474"/><rect x="0" y="19" width="1.5" height="1.5" fill="#2e2e2e"/><rect x="1" y="18" width="1.6" height="1.6" fill="#747474"/></svg>
<div class="a" style="left:13.5px;top:966px;width:503px;height:24.5px;background:#444;border:1px solid #2c2c2c;box-shadow:inset 0 0 0 1px #4e4e4e;"></div>
<div class="t" style="left:25.5px;top:972px;font-size:11px;color:#d6d6d6;letter-spacing:-0.514px;">Select Tool: select a component</div>
<svg class="a" style="left:527px;top:968px;" width="6" height="21" viewBox="0 0 6 21"><rect x="0" y="1" width="1.5" height="1.5" fill="#2e2e2e"/><rect x="1" y="0" width="1.6" height="1.6" fill="#747474"/><rect x="3" y="4" width="1.5" height="1.5" fill="#2e2e2e"/><rect x="4" y="3" width="1.6" height="1.6" fill="#747474"/><rect x="0" y="7" width="1.5" height="1.5" fill="#2e2e2e"/><rect x="1" y="6" width="1.6" height="1.6" fill="#747474"/><rect x="3" y="10" width="1.5" height="1.5" fill="#2e2e2e"/><rect x="4" y="9" width="1.6" height="1.6" fill="#747474"/><rect x="0" y="13" width="1.5" height="1.5" fill="#2e2e2e"/><rect x="1" y="12" width="1.6" height="1.6" fill="#747474"/><rect x="3" y="16" width="1.5" height="1.5" fill="#2e2e2e"/><rect x="4" y="15" width="1.6" height="1.6" fill="#747474"/><rect x="0" y="19" width="1.5" height="1.5" fill="#2e2e2e"/><rect x="1" y="18" width="1.6" height="1.6" fill="#747474"/></svg>
<div class="t" style="left:544.5px;top:972px;font-size:11px;color:#d6d6d6;letter-spacing:-0.601px;">MEL</div>
<div class="a" style="left:578.5px;top:966px;width:337px;height:24.5px;background:#2b2b2b;border:1px solid #3a3a3a;border-radius:3px;"></div>
<div class="a" style="left:922px;top:966px;width:337px;height:25px;background:#000;border:1px solid #2a2a2a;"></div>
<svg class="a" style="left:1260.5px;top:970px;" width="14" height="14.5" viewBox="0 0 14 14.5"><rect x=".5" y=".5" width="13" height="13.5" fill="#f0f0f0" stroke="#b8b8b8"/><rect x=".5" y=".5" width="13" height="2.6" fill="#5aa0e0"/><rect x="2" y="5" width="10" height="3.2" fill="#555"/><rect x="2" y="9.3" width="10" height="3.2" fill="#555"/></svg>
<div class="a" style="left:0px;top:992px;width:1280px;height:1px;background:#2e2e2e;"></div>
<div class="a" style="left:0px;top:993px;width:1280px;height:5px;background:#ece9d8;"></div>
<div class="a" style="left:0px;top:993px;width:1280px;height:1px;background:#f8f6ee;"></div>
</body></html>
